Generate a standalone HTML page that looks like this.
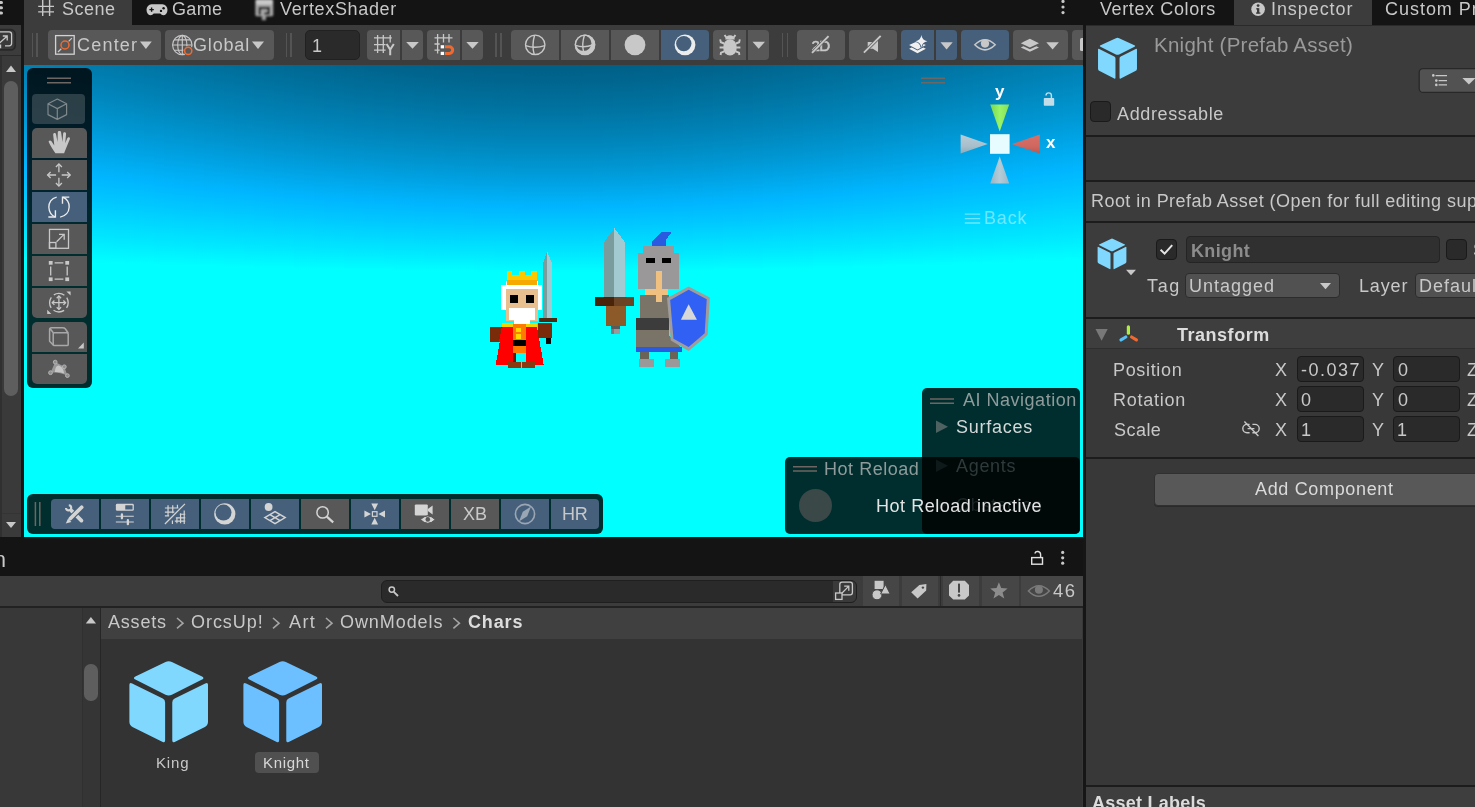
<!DOCTYPE html>
<html><head><meta charset="utf-8"><title>Unity</title>
<style>
html,body{margin:0;padding:0;background:#383838;}
body{width:1475px;height:807px;overflow:hidden;position:relative;font-family:"Liberation Sans",sans-serif;font-size:16px;color:#c8c8c8;}
.a{position:absolute;}
.t{position:absolute;white-space:nowrap;line-height:20px;height:20px;will-change:transform;}
.btn{position:absolute;background:#585858;}
.sel{background:#46607c;}
svg{position:absolute;overflow:visible;}
.fld{position:absolute;background:#2a2a2a;border:1px solid #1a1a1a;border-radius:4px;box-sizing:border-box;}
.hl{position:absolute;background:#1c1c1c;height:2px;}
</style></head><body>
<!-- ===== BACKGROUND PANELS ===== -->
<div class="a" id="tabbar" style="left:0;top:0;width:1475px;height:25px;background:#141414;"></div>
<div class="a" id="leftstrip" style="left:0;top:25px;width:21px;height:512px;background:#3a3a3a;"></div>
<div class="a" style="left:21px;top:25px;width:3px;height:512px;background:#161616;"></div>
<div class="a" id="scenetab" style="left:24px;top:0;width:108px;height:25px;background:#3c3c3c;"></div>
<div class="a" id="toolbar" style="left:24px;top:25px;width:1059px;height:40px;background:#3c3c3c;"></div>
<div class="a" id="scene" style="left:24px;top:65px;width:1059px;height:472px;background:linear-gradient(to bottom,#006a90 0px,#008cc0 60px,#00b0ff 125px,#00d4ff 165px,#00faff 200px,#00ffff 215px);"></div>
<div class="a" id="vdiv" style="left:1083px;top:25px;width:3px;height:782px;background:#161616;"></div>
<div class="a" id="insp" style="left:1086px;top:25px;width:389px;height:782px;background:#383838;border-top:1px solid #2a2a2a;box-sizing:border-box;"></div>
<div class="a" id="insptab" style="left:1234px;top:0;width:138px;height:25px;background:#3c3c3c;"></div>
<div class="a" id="projtabbar" style="left:0;top:537px;width:1083px;height:39px;background:#141414;"></div>
<div class="a" id="projtoolbar" style="left:0;top:575.6px;width:1083px;height:30px;background:#3c3c3c;"></div>
<div class="a" style="left:0;top:605.5px;width:1083px;height:2.2px;background:#222;"></div>
<div class="a" id="tree" style="left:0;top:608px;width:81px;height:199px;background:#383838;"></div>
<div class="a" id="treescroll" style="left:81.5px;top:608px;width:18.5px;height:199px;background:#353535;border-left:1px solid #303030;box-sizing:border-box;"></div>
<div class="a" style="left:100px;top:608px;width:1.4px;height:199px;background:#262626;"></div>
<div class="a" id="crumbbar" style="left:101.4px;top:608px;width:981px;height:31px;background:#404040;"></div>
<div class="a" id="grid" style="left:101.4px;top:639px;width:981px;height:168px;background:#333333;"></div>
<!-- sky strips (perspective skybox gradient) -->
<div class="a" style="left:24px;top:65px;width:1059px;height:472px;overflow:hidden">
<div class="a" style="left:0.0px;top:0;width:10.59px;height:472px;background:linear-gradient(to bottom,#004f6e -166px,#005678 -135px,#005d82 -104px,#00658e -75px,#006e9a -47px,#0078a8 -20px,#0082b6 6px,#008ec6 31px,#009ad8 56px,#00a8eb 80px,#00b6ff 103px,#00b6ff 103px,#00c6ff 127px,#00d8ff 150px,#00eaff 172px,#00ffff 195px)"></div>
<div class="a" style="left:9.99px;top:0;width:10.59px;height:472px;background:linear-gradient(to bottom,#004f6e -163px,#005678 -131px,#005d82 -101px,#00658e -72px,#006e9a -44px,#0078a8 -18px,#0082b6 8px,#008ec6 33px,#009ad8 57px,#00a8eb 81px,#00b6ff 105px,#00b6ff 105px,#00c6ff 128px,#00d8ff 150px,#00eaff 173px,#00ffff 195px)"></div>
<div class="a" style="left:19.98px;top:0;width:10.59px;height:472px;background:linear-gradient(to bottom,#004f6e -159px,#005678 -128px,#005d82 -98px,#00658e -69px,#006e9a -42px,#0078a8 -15px,#0082b6 10px,#008ec6 35px,#009ad8 59px,#00a8eb 83px,#00b6ff 106px,#00b6ff 106px,#00c6ff 129px,#00d8ff 151px,#00eaff 174px,#00ffff 196px)"></div>
<div class="a" style="left:29.97px;top:0;width:10.59px;height:472px;background:linear-gradient(to bottom,#004f6e -155px,#005678 -124px,#005d82 -95px,#00658e -66px,#006e9a -39px,#0078a8 -13px,#0082b6 12px,#008ec6 37px,#009ad8 61px,#00a8eb 84px,#00b6ff 107px,#00b6ff 107px,#00c6ff 130px,#00d8ff 152px,#00eaff 174px,#00ffff 196px)"></div>
<div class="a" style="left:39.96px;top:0;width:10.59px;height:472px;background:linear-gradient(to bottom,#004f6e -152px,#005678 -121px,#005d82 -92px,#00658e -64px,#006e9a -37px,#0078a8 -11px,#0082b6 14px,#008ec6 39px,#009ad8 62px,#00a8eb 86px,#00b6ff 108px,#00b6ff 108px,#00c6ff 131px,#00d8ff 153px,#00eaff 175px,#00ffff 196px)"></div>
<div class="a" style="left:49.95px;top:0;width:10.59px;height:472px;background:linear-gradient(to bottom,#004f6e -148px,#005678 -118px,#005d82 -88px,#00658e -61px,#006e9a -34px,#0078a8 -8px,#0082b6 16px,#008ec6 40px,#009ad8 64px,#00a8eb 87px,#00b6ff 109px,#00b6ff 110px,#00c6ff 132px,#00d8ff 154px,#00eaff 175px,#00ffff 197px)"></div>
<div class="a" style="left:59.94px;top:0;width:10.59px;height:472px;background:linear-gradient(to bottom,#004f6e -144px,#005678 -114px,#005d82 -85px,#00658e -58px,#006e9a -32px,#0078a8 -6px,#0082b6 18px,#008ec6 42px,#009ad8 66px,#00a8eb 88px,#00b6ff 111px,#00b6ff 111px,#00c6ff 133px,#00d8ff 154px,#00eaff 176px,#00ffff 197px)"></div>
<div class="a" style="left:69.93px;top:0;width:10.59px;height:472px;background:linear-gradient(to bottom,#004f6e -141px,#005678 -111px,#005d82 -82px,#00658e -55px,#006e9a -29px,#0078a8 -4px,#0082b6 20px,#008ec6 44px,#009ad8 67px,#00a8eb 90px,#00b6ff 112px,#00b6ff 112px,#00c6ff 134px,#00d8ff 155px,#00eaff 176px,#00ffff 198px)"></div>
<div class="a" style="left:79.92px;top:0;width:10.59px;height:472px;background:linear-gradient(to bottom,#004f6e -137px,#005678 -108px,#005d82 -80px,#00658e -53px,#006e9a -27px,#0078a8 -2px,#0082b6 22px,#008ec6 46px,#009ad8 69px,#00a8eb 91px,#00b6ff 113px,#00b6ff 113px,#00c6ff 135px,#00d8ff 156px,#00eaff 177px,#00ffff 198px)"></div>
<div class="a" style="left:89.92px;top:0;width:10.59px;height:472px;background:linear-gradient(to bottom,#004f6e -134px,#005678 -105px,#005d82 -77px,#00658e -50px,#006e9a -24px,#0078a8 0px,#0082b6 24px,#008ec6 48px,#009ad8 70px,#00a8eb 92px,#00b6ff 114px,#00b6ff 114px,#00c6ff 136px,#00d8ff 157px,#00eaff 178px,#00ffff 198px)"></div>
<div class="a" style="left:99.91px;top:0;width:10.59px;height:472px;background:linear-gradient(to bottom,#004f6e -131px,#005678 -101px,#005d82 -74px,#00658e -47px,#006e9a -22px,#0078a8 3px,#0082b6 26px,#008ec6 49px,#009ad8 72px,#00a8eb 94px,#00b6ff 115px,#00b6ff 115px,#00c6ff 136px,#00d8ff 157px,#00eaff 178px,#00ffff 199px)"></div>
<div class="a" style="left:109.9px;top:0;width:10.59px;height:472px;background:linear-gradient(to bottom,#004f6e -127px,#005678 -98px,#005d82 -71px,#00658e -45px,#006e9a -20px,#0078a8 5px,#0082b6 28px,#008ec6 51px,#009ad8 73px,#00a8eb 95px,#00b6ff 116px,#00b6ff 116px,#00c6ff 137px,#00d8ff 158px,#00eaff 179px,#00ffff 199px)"></div>
<div class="a" style="left:119.89px;top:0;width:10.59px;height:472px;background:linear-gradient(to bottom,#004f6e -124px,#005678 -95px,#005d82 -68px,#00658e -42px,#006e9a -17px,#0078a8 7px,#0082b6 30px,#008ec6 53px,#009ad8 75px,#00a8eb 96px,#00b6ff 117px,#00b6ff 117px,#00c6ff 138px,#00d8ff 159px,#00eaff 179px,#00ffff 199px)"></div>
<div class="a" style="left:129.88px;top:0;width:10.59px;height:472px;background:linear-gradient(to bottom,#004f6e -121px,#005678 -92px,#005d82 -65px,#00658e -40px,#006e9a -15px,#0078a8 9px,#0082b6 32px,#008ec6 54px,#009ad8 76px,#00a8eb 98px,#00b6ff 118px,#00b6ff 119px,#00c6ff 139px,#00d8ff 160px,#00eaff 180px,#00ffff 200px)"></div>
<div class="a" style="left:139.87px;top:0;width:10.59px;height:472px;background:linear-gradient(to bottom,#004f6e -117px,#005678 -89px,#005d82 -63px,#00658e -37px,#006e9a -13px,#0078a8 11px,#0082b6 34px,#008ec6 56px,#009ad8 78px,#00a8eb 99px,#00b6ff 119px,#00b6ff 120px,#00c6ff 140px,#00d8ff 160px,#00eaff 180px,#00ffff 200px)"></div>
<div class="a" style="left:149.86px;top:0;width:10.59px;height:472px;background:linear-gradient(to bottom,#004f6e -114px,#005678 -87px,#005d82 -60px,#00658e -35px,#006e9a -10px,#0078a8 13px,#0082b6 36px,#008ec6 58px,#009ad8 79px,#00a8eb 100px,#00b6ff 121px,#00b6ff 121px,#00c6ff 141px,#00d8ff 161px,#00eaff 181px,#00ffff 200px)"></div>
<div class="a" style="left:159.85px;top:0;width:10.59px;height:472px;background:linear-gradient(to bottom,#004f6e -111px,#005678 -84px,#005d82 -57px,#00658e -32px,#006e9a -8px,#0078a8 15px,#0082b6 37px,#008ec6 59px,#009ad8 80px,#00a8eb 101px,#00b6ff 122px,#00b6ff 122px,#00c6ff 142px,#00d8ff 162px,#00eaff 181px,#00ffff 201px)"></div>
<div class="a" style="left:169.84px;top:0;width:10.59px;height:472px;background:linear-gradient(to bottom,#004f6e -108px,#005678 -81px,#005d82 -55px,#00658e -30px,#006e9a -6px,#0078a8 17px,#0082b6 39px,#008ec6 61px,#009ad8 82px,#00a8eb 102px,#00b6ff 123px,#00b6ff 123px,#00c6ff 143px,#00d8ff 162px,#00eaff 182px,#00ffff 201px)"></div>
<div class="a" style="left:179.83px;top:0;width:10.59px;height:472px;background:linear-gradient(to bottom,#004f6e -105px,#005678 -78px,#005d82 -52px,#00658e -28px,#006e9a -4px,#0078a8 19px,#0082b6 41px,#008ec6 62px,#009ad8 83px,#00a8eb 104px,#00b6ff 124px,#00b6ff 124px,#00c6ff 143px,#00d8ff 163px,#00eaff 182px,#00ffff 201px)"></div>
<div class="a" style="left:189.82px;top:0;width:10.59px;height:472px;background:linear-gradient(to bottom,#004f6e -102px,#005678 -75px,#005d82 -50px,#00658e -25px,#006e9a -2px,#0078a8 21px,#0082b6 42px,#008ec6 64px,#009ad8 84px,#00a8eb 105px,#00b6ff 124px,#00b6ff 125px,#00c6ff 144px,#00d8ff 163px,#00eaff 183px,#00ffff 201px)"></div>
<div class="a" style="left:199.81px;top:0;width:10.59px;height:472px;background:linear-gradient(to bottom,#004f6e -100px,#005678 -73px,#005d82 -48px,#00658e -23px,#006e9a -0px,#0078a8 22px,#0082b6 44px,#008ec6 65px,#009ad8 86px,#00a8eb 106px,#00b6ff 125px,#00b6ff 126px,#00c6ff 145px,#00d8ff 164px,#00eaff 183px,#00ffff 202px)"></div>
<div class="a" style="left:209.8px;top:0;width:10.59px;height:472px;background:linear-gradient(to bottom,#004f6e -97px,#005678 -70px,#005d82 -45px,#00658e -21px,#006e9a 2px,#0078a8 24px,#0082b6 46px,#008ec6 67px,#009ad8 87px,#00a8eb 107px,#00b6ff 126px,#00b6ff 126px,#00c6ff 146px,#00d8ff 165px,#00eaff 183px,#00ffff 202px)"></div>
<div class="a" style="left:219.79px;top:0;width:10.59px;height:472px;background:linear-gradient(to bottom,#004f6e -94px,#005678 -68px,#005d82 -43px,#00658e -19px,#006e9a 4px,#0078a8 26px,#0082b6 47px,#008ec6 68px,#009ad8 88px,#00a8eb 108px,#00b6ff 127px,#00b6ff 127px,#00c6ff 146px,#00d8ff 165px,#00eaff 184px,#00ffff 202px)"></div>
<div class="a" style="left:229.78px;top:0;width:10.59px;height:472px;background:linear-gradient(to bottom,#004f6e -91px,#005678 -65px,#005d82 -41px,#00658e -17px,#006e9a 6px,#0078a8 28px,#0082b6 49px,#008ec6 69px,#009ad8 89px,#00a8eb 109px,#00b6ff 128px,#00b6ff 128px,#00c6ff 147px,#00d8ff 166px,#00eaff 184px,#00ffff 203px)"></div>
<div class="a" style="left:239.77px;top:0;width:10.59px;height:472px;background:linear-gradient(to bottom,#004f6e -89px,#005678 -63px,#005d82 -38px,#00658e -15px,#006e9a 8px,#0078a8 29px,#0082b6 50px,#008ec6 71px,#009ad8 91px,#00a8eb 110px,#00b6ff 129px,#00b6ff 129px,#00c6ff 148px,#00d8ff 166px,#00eaff 185px,#00ffff 203px)"></div>
<div class="a" style="left:249.76px;top:0;width:10.59px;height:472px;background:linear-gradient(to bottom,#004f6e -86px,#005678 -61px,#005d82 -36px,#00658e -13px,#006e9a 9px,#0078a8 31px,#0082b6 52px,#008ec6 72px,#009ad8 92px,#00a8eb 111px,#00b6ff 130px,#00b6ff 130px,#00c6ff 149px,#00d8ff 167px,#00eaff 185px,#00ffff 203px)"></div>
<div class="a" style="left:259.75px;top:0;width:10.59px;height:472px;background:linear-gradient(to bottom,#004f6e -84px,#005678 -58px,#005d82 -34px,#00658e -11px,#006e9a 11px,#0078a8 32px,#0082b6 53px,#008ec6 73px,#009ad8 93px,#00a8eb 112px,#00b6ff 131px,#00b6ff 131px,#00c6ff 149px,#00d8ff 167px,#00eaff 185px,#00ffff 203px)"></div>
<div class="a" style="left:269.75px;top:0;width:10.59px;height:472px;background:linear-gradient(to bottom,#004f6e -81px,#005678 -56px,#005d82 -32px,#00658e -9px,#006e9a 13px,#0078a8 34px,#0082b6 54px,#008ec6 74px,#009ad8 94px,#00a8eb 113px,#00b6ff 131px,#00b6ff 131px,#00c6ff 150px,#00d8ff 168px,#00eaff 186px,#00ffff 204px)"></div>
<div class="a" style="left:279.74px;top:0;width:10.59px;height:472px;background:linear-gradient(to bottom,#004f6e -79px,#005678 -54px,#005d82 -30px,#00658e -8px,#006e9a 14px,#0078a8 35px,#0082b6 56px,#008ec6 76px,#009ad8 95px,#00a8eb 114px,#00b6ff 132px,#00b6ff 132px,#00c6ff 150px,#00d8ff 168px,#00eaff 186px,#00ffff 204px)"></div>
<div class="a" style="left:289.73px;top:0;width:10.59px;height:472px;background:linear-gradient(to bottom,#004f6e -77px,#005678 -52px,#005d82 -28px,#00658e -6px,#006e9a 16px,#0078a8 37px,#0082b6 57px,#008ec6 77px,#009ad8 96px,#00a8eb 115px,#00b6ff 133px,#00b6ff 133px,#00c6ff 151px,#00d8ff 169px,#00eaff 187px,#00ffff 204px)"></div>
<div class="a" style="left:299.72px;top:0;width:10.59px;height:472px;background:linear-gradient(to bottom,#004f6e -75px,#005678 -50px,#005d82 -27px,#00658e -4px,#006e9a 17px,#0078a8 38px,#0082b6 58px,#008ec6 78px,#009ad8 97px,#00a8eb 115px,#00b6ff 134px,#00b6ff 134px,#00c6ff 152px,#00d8ff 169px,#00eaff 187px,#00ffff 204px)"></div>
<div class="a" style="left:309.71px;top:0;width:10.59px;height:472px;background:linear-gradient(to bottom,#004f6e -73px,#005678 -48px,#005d82 -25px,#00658e -3px,#006e9a 19px,#0078a8 39px,#0082b6 59px,#008ec6 79px,#009ad8 98px,#00a8eb 116px,#00b6ff 134px,#00b6ff 134px,#00c6ff 152px,#00d8ff 170px,#00eaff 187px,#00ffff 204px)"></div>
<div class="a" style="left:319.7px;top:0;width:10.59px;height:472px;background:linear-gradient(to bottom,#004f6e -71px,#005678 -46px,#005d82 -23px,#00658e -1px,#006e9a 20px,#0078a8 41px,#0082b6 61px,#008ec6 80px,#009ad8 99px,#00a8eb 117px,#00b6ff 135px,#00b6ff 135px,#00c6ff 153px,#00d8ff 170px,#00eaff 188px,#00ffff 205px)"></div>
<div class="a" style="left:329.69px;top:0;width:10.59px;height:472px;background:linear-gradient(to bottom,#004f6e -69px,#005678 -45px,#005d82 -22px,#00658e 0px,#006e9a 22px,#0078a8 42px,#0082b6 62px,#008ec6 81px,#009ad8 99px,#00a8eb 118px,#00b6ff 136px,#00b6ff 136px,#00c6ff 153px,#00d8ff 171px,#00eaff 188px,#00ffff 205px)"></div>
<div class="a" style="left:339.68px;top:0;width:10.59px;height:472px;background:linear-gradient(to bottom,#004f6e -67px,#005678 -43px,#005d82 -20px,#00658e 2px,#006e9a 23px,#0078a8 43px,#0082b6 63px,#008ec6 82px,#009ad8 100px,#00a8eb 118px,#00b6ff 136px,#00b6ff 136px,#00c6ff 154px,#00d8ff 171px,#00eaff 188px,#00ffff 205px)"></div>
<div class="a" style="left:349.67px;top:0;width:10.59px;height:472px;background:linear-gradient(to bottom,#004f6e -65px,#005678 -41px,#005d82 -19px,#00658e 3px,#006e9a 24px,#0078a8 44px,#0082b6 64px,#008ec6 83px,#009ad8 101px,#00a8eb 119px,#00b6ff 137px,#00b6ff 137px,#00c6ff 154px,#00d8ff 171px,#00eaff 188px,#00ffff 205px)"></div>
<div class="a" style="left:359.66px;top:0;width:10.59px;height:472px;background:linear-gradient(to bottom,#004f6e -64px,#005678 -40px,#005d82 -17px,#00658e 4px,#006e9a 25px,#0078a8 45px,#0082b6 65px,#008ec6 83px,#009ad8 102px,#00a8eb 120px,#00b6ff 137px,#00b6ff 137px,#00c6ff 155px,#00d8ff 172px,#00eaff 189px,#00ffff 205px)"></div>
<div class="a" style="left:369.65px;top:0;width:10.59px;height:472px;background:linear-gradient(to bottom,#004f6e -62px,#005678 -38px,#005d82 -16px,#00658e 6px,#006e9a 26px,#0078a8 46px,#0082b6 66px,#008ec6 84px,#009ad8 103px,#00a8eb 120px,#00b6ff 138px,#00b6ff 138px,#00c6ff 155px,#00d8ff 172px,#00eaff 189px,#00ffff 206px)"></div>
<div class="a" style="left:379.64px;top:0;width:10.59px;height:472px;background:linear-gradient(to bottom,#004f6e -61px,#005678 -37px,#005d82 -15px,#00658e 7px,#006e9a 27px,#0078a8 47px,#0082b6 66px,#008ec6 85px,#009ad8 103px,#00a8eb 121px,#00b6ff 138px,#00b6ff 138px,#00c6ff 155px,#00d8ff 172px,#00eaff 189px,#00ffff 206px)"></div>
<div class="a" style="left:389.63px;top:0;width:10.59px;height:472px;background:linear-gradient(to bottom,#004f6e -59px,#005678 -36px,#005d82 -13px,#00658e 8px,#006e9a 28px,#0078a8 48px,#0082b6 67px,#008ec6 86px,#009ad8 104px,#00a8eb 121px,#00b6ff 139px,#00b6ff 139px,#00c6ff 156px,#00d8ff 173px,#00eaff 189px,#00ffff 206px)"></div>
<div class="a" style="left:399.62px;top:0;width:10.59px;height:472px;background:linear-gradient(to bottom,#004f6e -58px,#005678 -35px,#005d82 -12px,#00658e 9px,#006e9a 29px,#0078a8 49px,#0082b6 68px,#008ec6 86px,#009ad8 104px,#00a8eb 122px,#00b6ff 139px,#00b6ff 139px,#00c6ff 156px,#00d8ff 173px,#00eaff 190px,#00ffff 206px)"></div>
<div class="a" style="left:409.61px;top:0;width:10.59px;height:472px;background:linear-gradient(to bottom,#004f6e -57px,#005678 -33px,#005d82 -11px,#00658e 10px,#006e9a 30px,#0078a8 50px,#0082b6 69px,#008ec6 87px,#009ad8 105px,#00a8eb 122px,#00b6ff 140px,#00b6ff 140px,#00c6ff 157px,#00d8ff 173px,#00eaff 190px,#00ffff 206px)"></div>
<div class="a" style="left:419.6px;top:0;width:10.59px;height:472px;background:linear-gradient(to bottom,#004f6e -56px,#005678 -32px,#005d82 -10px,#00658e 11px,#006e9a 31px,#0078a8 50px,#0082b6 69px,#008ec6 88px,#009ad8 105px,#00a8eb 123px,#00b6ff 140px,#00b6ff 140px,#00c6ff 157px,#00d8ff 173px,#00eaff 190px,#00ffff 206px)"></div>
<div class="a" style="left:429.59px;top:0;width:10.59px;height:472px;background:linear-gradient(to bottom,#004f6e -55px,#005678 -32px,#005d82 -10px,#00658e 11px,#006e9a 32px,#0078a8 51px,#0082b6 70px,#008ec6 88px,#009ad8 106px,#00a8eb 123px,#00b6ff 140px,#00b6ff 140px,#00c6ff 157px,#00d8ff 174px,#00eaff 190px,#00ffff 206px)"></div>
<div class="a" style="left:439.58px;top:0;width:10.59px;height:472px;background:linear-gradient(to bottom,#004f6e -54px,#005678 -31px,#005d82 -9px,#00658e 12px,#006e9a 32px,#0078a8 52px,#0082b6 70px,#008ec6 88px,#009ad8 106px,#00a8eb 124px,#00b6ff 140px,#00b6ff 141px,#00c6ff 157px,#00d8ff 174px,#00eaff 190px,#00ffff 206px)"></div>
<div class="a" style="left:449.58px;top:0;width:10.59px;height:472px;background:linear-gradient(to bottom,#004f6e -53px,#005678 -30px,#005d82 -8px,#00658e 13px,#006e9a 33px,#0078a8 52px,#0082b6 71px,#008ec6 89px,#009ad8 107px,#00a8eb 124px,#00b6ff 141px,#00b6ff 141px,#00c6ff 158px,#00d8ff 174px,#00eaff 190px,#00ffff 207px)"></div>
<div class="a" style="left:459.57px;top:0;width:10.59px;height:472px;background:linear-gradient(to bottom,#004f6e -52px,#005678 -29px,#005d82 -8px,#00658e 13px,#006e9a 33px,#0078a8 53px,#0082b6 71px,#008ec6 89px,#009ad8 107px,#00a8eb 124px,#00b6ff 141px,#00b6ff 141px,#00c6ff 158px,#00d8ff 174px,#00eaff 190px,#00ffff 207px)"></div>
<div class="a" style="left:469.56px;top:0;width:10.59px;height:472px;background:linear-gradient(to bottom,#004f6e -52px,#005678 -29px,#005d82 -7px,#00658e 14px,#006e9a 34px,#0078a8 53px,#0082b6 71px,#008ec6 90px,#009ad8 107px,#00a8eb 124px,#00b6ff 141px,#00b6ff 141px,#00c6ff 158px,#00d8ff 174px,#00eaff 191px,#00ffff 207px)"></div>
<div class="a" style="left:479.55px;top:0;width:10.59px;height:472px;background:linear-gradient(to bottom,#004f6e -51px,#005678 -28px,#005d82 -7px,#00658e 14px,#006e9a 34px,#0078a8 53px,#0082b6 72px,#008ec6 90px,#009ad8 107px,#00a8eb 125px,#00b6ff 141px,#00b6ff 141px,#00c6ff 158px,#00d8ff 174px,#00eaff 191px,#00ffff 207px)"></div>
<div class="a" style="left:489.54px;top:0;width:10.59px;height:472px;background:linear-gradient(to bottom,#004f6e -51px,#005678 -28px,#005d82 -6px,#00658e 14px,#006e9a 34px,#0078a8 53px,#0082b6 72px,#008ec6 90px,#009ad8 108px,#00a8eb 125px,#00b6ff 141px,#00b6ff 142px,#00c6ff 158px,#00d8ff 175px,#00eaff 191px,#00ffff 207px)"></div>
<div class="a" style="left:499.53px;top:0;width:10.59px;height:472px;background:linear-gradient(to bottom,#004f6e -50px,#005678 -28px,#005d82 -6px,#00658e 15px,#006e9a 35px,#0078a8 54px,#0082b6 72px,#008ec6 90px,#009ad8 108px,#00a8eb 125px,#00b6ff 142px,#00b6ff 142px,#00c6ff 158px,#00d8ff 175px,#00eaff 191px,#00ffff 207px)"></div>
<div class="a" style="left:509.52px;top:0;width:10.59px;height:472px;background:linear-gradient(to bottom,#004f6e -50px,#005678 -27px,#005d82 -6px,#00658e 15px,#006e9a 35px,#0078a8 54px,#0082b6 72px,#008ec6 90px,#009ad8 108px,#00a8eb 125px,#00b6ff 142px,#00b6ff 142px,#00c6ff 158px,#00d8ff 175px,#00eaff 191px,#00ffff 207px)"></div>
<div class="a" style="left:519.51px;top:0;width:10.59px;height:472px;background:linear-gradient(to bottom,#004f6e -50px,#005678 -27px,#005d82 -6px,#00658e 15px,#006e9a 35px,#0078a8 54px,#0082b6 72px,#008ec6 90px,#009ad8 108px,#00a8eb 125px,#00b6ff 142px,#00b6ff 142px,#00c6ff 158px,#00d8ff 175px,#00eaff 191px,#00ffff 207px)"></div>
<div class="a" style="left:529.5px;top:0;width:10.59px;height:472px;background:linear-gradient(to bottom,#004f6e -50px,#005678 -27px,#005d82 -6px,#00658e 15px,#006e9a 35px,#0078a8 54px,#0082b6 72px,#008ec6 90px,#009ad8 108px,#00a8eb 125px,#00b6ff 142px,#00b6ff 142px,#00c6ff 158px,#00d8ff 175px,#00eaff 191px,#00ffff 207px)"></div>
<div class="a" style="left:539.49px;top:0;width:10.59px;height:472px;background:linear-gradient(to bottom,#004f6e -50px,#005678 -27px,#005d82 -6px,#00658e 15px,#006e9a 35px,#0078a8 54px,#0082b6 72px,#008ec6 90px,#009ad8 108px,#00a8eb 125px,#00b6ff 142px,#00b6ff 142px,#00c6ff 158px,#00d8ff 175px,#00eaff 191px,#00ffff 207px)"></div>
<div class="a" style="left:549.48px;top:0;width:10.59px;height:472px;background:linear-gradient(to bottom,#004f6e -50px,#005678 -28px,#005d82 -6px,#00658e 15px,#006e9a 35px,#0078a8 54px,#0082b6 72px,#008ec6 90px,#009ad8 108px,#00a8eb 125px,#00b6ff 142px,#00b6ff 142px,#00c6ff 158px,#00d8ff 175px,#00eaff 191px,#00ffff 207px)"></div>
<div class="a" style="left:559.47px;top:0;width:10.59px;height:472px;background:linear-gradient(to bottom,#004f6e -51px,#005678 -28px,#005d82 -6px,#00658e 14px,#006e9a 34px,#0078a8 53px,#0082b6 72px,#008ec6 90px,#009ad8 108px,#00a8eb 125px,#00b6ff 141px,#00b6ff 142px,#00c6ff 158px,#00d8ff 175px,#00eaff 191px,#00ffff 207px)"></div>
<div class="a" style="left:569.46px;top:0;width:10.59px;height:472px;background:linear-gradient(to bottom,#004f6e -51px,#005678 -28px,#005d82 -7px,#00658e 14px,#006e9a 34px,#0078a8 53px,#0082b6 72px,#008ec6 90px,#009ad8 107px,#00a8eb 125px,#00b6ff 141px,#00b6ff 141px,#00c6ff 158px,#00d8ff 174px,#00eaff 191px,#00ffff 207px)"></div>
<div class="a" style="left:579.45px;top:0;width:10.59px;height:472px;background:linear-gradient(to bottom,#004f6e -52px,#005678 -29px,#005d82 -7px,#00658e 14px,#006e9a 34px,#0078a8 53px,#0082b6 71px,#008ec6 90px,#009ad8 107px,#00a8eb 124px,#00b6ff 141px,#00b6ff 141px,#00c6ff 158px,#00d8ff 174px,#00eaff 191px,#00ffff 207px)"></div>
<div class="a" style="left:589.44px;top:0;width:10.59px;height:472px;background:linear-gradient(to bottom,#004f6e -52px,#005678 -29px,#005d82 -8px,#00658e 13px,#006e9a 33px,#0078a8 53px,#0082b6 71px,#008ec6 89px,#009ad8 107px,#00a8eb 124px,#00b6ff 141px,#00b6ff 141px,#00c6ff 158px,#00d8ff 174px,#00eaff 190px,#00ffff 207px)"></div>
<div class="a" style="left:599.43px;top:0;width:10.59px;height:472px;background:linear-gradient(to bottom,#004f6e -53px,#005678 -30px,#005d82 -8px,#00658e 13px,#006e9a 33px,#0078a8 52px,#0082b6 71px,#008ec6 89px,#009ad8 107px,#00a8eb 124px,#00b6ff 141px,#00b6ff 141px,#00c6ff 158px,#00d8ff 174px,#00eaff 190px,#00ffff 207px)"></div>
<div class="a" style="left:609.42px;top:0;width:10.59px;height:472px;background:linear-gradient(to bottom,#004f6e -54px,#005678 -31px,#005d82 -9px,#00658e 12px,#006e9a 32px,#0078a8 52px,#0082b6 70px,#008ec6 88px,#009ad8 106px,#00a8eb 124px,#00b6ff 140px,#00b6ff 141px,#00c6ff 157px,#00d8ff 174px,#00eaff 190px,#00ffff 206px)"></div>
<div class="a" style="left:619.42px;top:0;width:10.59px;height:472px;background:linear-gradient(to bottom,#004f6e -55px,#005678 -32px,#005d82 -10px,#00658e 11px,#006e9a 32px,#0078a8 51px,#0082b6 70px,#008ec6 88px,#009ad8 106px,#00a8eb 123px,#00b6ff 140px,#00b6ff 140px,#00c6ff 157px,#00d8ff 174px,#00eaff 190px,#00ffff 206px)"></div>
<div class="a" style="left:629.41px;top:0;width:10.59px;height:472px;background:linear-gradient(to bottom,#004f6e -56px,#005678 -32px,#005d82 -10px,#00658e 11px,#006e9a 31px,#0078a8 50px,#0082b6 69px,#008ec6 88px,#009ad8 105px,#00a8eb 123px,#00b6ff 140px,#00b6ff 140px,#00c6ff 157px,#00d8ff 173px,#00eaff 190px,#00ffff 206px)"></div>
<div class="a" style="left:639.4px;top:0;width:10.59px;height:472px;background:linear-gradient(to bottom,#004f6e -57px,#005678 -33px,#005d82 -11px,#00658e 10px,#006e9a 30px,#0078a8 50px,#0082b6 69px,#008ec6 87px,#009ad8 105px,#00a8eb 122px,#00b6ff 140px,#00b6ff 140px,#00c6ff 157px,#00d8ff 173px,#00eaff 190px,#00ffff 206px)"></div>
<div class="a" style="left:649.39px;top:0;width:10.59px;height:472px;background:linear-gradient(to bottom,#004f6e -58px,#005678 -35px,#005d82 -12px,#00658e 9px,#006e9a 29px,#0078a8 49px,#0082b6 68px,#008ec6 86px,#009ad8 104px,#00a8eb 122px,#00b6ff 139px,#00b6ff 139px,#00c6ff 156px,#00d8ff 173px,#00eaff 190px,#00ffff 206px)"></div>
<div class="a" style="left:659.38px;top:0;width:10.59px;height:472px;background:linear-gradient(to bottom,#004f6e -59px,#005678 -36px,#005d82 -13px,#00658e 8px,#006e9a 28px,#0078a8 48px,#0082b6 67px,#008ec6 86px,#009ad8 104px,#00a8eb 121px,#00b6ff 139px,#00b6ff 139px,#00c6ff 156px,#00d8ff 173px,#00eaff 189px,#00ffff 206px)"></div>
<div class="a" style="left:669.37px;top:0;width:10.59px;height:472px;background:linear-gradient(to bottom,#004f6e -61px,#005678 -37px,#005d82 -15px,#00658e 7px,#006e9a 27px,#0078a8 47px,#0082b6 66px,#008ec6 85px,#009ad8 103px,#00a8eb 121px,#00b6ff 138px,#00b6ff 138px,#00c6ff 155px,#00d8ff 172px,#00eaff 189px,#00ffff 206px)"></div>
<div class="a" style="left:679.36px;top:0;width:10.59px;height:472px;background:linear-gradient(to bottom,#004f6e -62px,#005678 -38px,#005d82 -16px,#00658e 6px,#006e9a 26px,#0078a8 46px,#0082b6 66px,#008ec6 84px,#009ad8 103px,#00a8eb 120px,#00b6ff 138px,#00b6ff 138px,#00c6ff 155px,#00d8ff 172px,#00eaff 189px,#00ffff 206px)"></div>
<div class="a" style="left:689.35px;top:0;width:10.59px;height:472px;background:linear-gradient(to bottom,#004f6e -64px,#005678 -40px,#005d82 -17px,#00658e 4px,#006e9a 25px,#0078a8 45px,#0082b6 65px,#008ec6 83px,#009ad8 102px,#00a8eb 120px,#00b6ff 137px,#00b6ff 137px,#00c6ff 155px,#00d8ff 172px,#00eaff 189px,#00ffff 205px)"></div>
<div class="a" style="left:699.34px;top:0;width:10.59px;height:472px;background:linear-gradient(to bottom,#004f6e -65px,#005678 -41px,#005d82 -19px,#00658e 3px,#006e9a 24px,#0078a8 44px,#0082b6 64px,#008ec6 83px,#009ad8 101px,#00a8eb 119px,#00b6ff 137px,#00b6ff 137px,#00c6ff 154px,#00d8ff 171px,#00eaff 188px,#00ffff 205px)"></div>
<div class="a" style="left:709.33px;top:0;width:10.59px;height:472px;background:linear-gradient(to bottom,#004f6e -67px,#005678 -43px,#005d82 -20px,#00658e 2px,#006e9a 23px,#0078a8 43px,#0082b6 63px,#008ec6 82px,#009ad8 100px,#00a8eb 118px,#00b6ff 136px,#00b6ff 136px,#00c6ff 154px,#00d8ff 171px,#00eaff 188px,#00ffff 205px)"></div>
<div class="a" style="left:719.32px;top:0;width:10.59px;height:472px;background:linear-gradient(to bottom,#004f6e -69px,#005678 -45px,#005d82 -22px,#00658e 0px,#006e9a 22px,#0078a8 42px,#0082b6 62px,#008ec6 81px,#009ad8 99px,#00a8eb 118px,#00b6ff 136px,#00b6ff 136px,#00c6ff 153px,#00d8ff 171px,#00eaff 188px,#00ffff 205px)"></div>
<div class="a" style="left:729.31px;top:0;width:10.59px;height:472px;background:linear-gradient(to bottom,#004f6e -71px,#005678 -46px,#005d82 -23px,#00658e -1px,#006e9a 20px,#0078a8 41px,#0082b6 61px,#008ec6 80px,#009ad8 99px,#00a8eb 117px,#00b6ff 135px,#00b6ff 135px,#00c6ff 153px,#00d8ff 170px,#00eaff 188px,#00ffff 205px)"></div>
<div class="a" style="left:739.3px;top:0;width:10.59px;height:472px;background:linear-gradient(to bottom,#004f6e -73px,#005678 -48px,#005d82 -25px,#00658e -3px,#006e9a 19px,#0078a8 39px,#0082b6 59px,#008ec6 79px,#009ad8 98px,#00a8eb 116px,#00b6ff 134px,#00b6ff 134px,#00c6ff 152px,#00d8ff 170px,#00eaff 187px,#00ffff 204px)"></div>
<div class="a" style="left:749.29px;top:0;width:10.59px;height:472px;background:linear-gradient(to bottom,#004f6e -75px,#005678 -50px,#005d82 -27px,#00658e -4px,#006e9a 17px,#0078a8 38px,#0082b6 58px,#008ec6 78px,#009ad8 97px,#00a8eb 115px,#00b6ff 134px,#00b6ff 134px,#00c6ff 152px,#00d8ff 169px,#00eaff 187px,#00ffff 204px)"></div>
<div class="a" style="left:759.28px;top:0;width:10.59px;height:472px;background:linear-gradient(to bottom,#004f6e -77px,#005678 -52px,#005d82 -28px,#00658e -6px,#006e9a 16px,#0078a8 37px,#0082b6 57px,#008ec6 77px,#009ad8 96px,#00a8eb 115px,#00b6ff 133px,#00b6ff 133px,#00c6ff 151px,#00d8ff 169px,#00eaff 187px,#00ffff 204px)"></div>
<div class="a" style="left:769.27px;top:0;width:10.59px;height:472px;background:linear-gradient(to bottom,#004f6e -79px,#005678 -54px,#005d82 -30px,#00658e -8px,#006e9a 14px,#0078a8 35px,#0082b6 56px,#008ec6 76px,#009ad8 95px,#00a8eb 114px,#00b6ff 132px,#00b6ff 132px,#00c6ff 150px,#00d8ff 168px,#00eaff 186px,#00ffff 204px)"></div>
<div class="a" style="left:779.26px;top:0;width:10.59px;height:472px;background:linear-gradient(to bottom,#004f6e -81px,#005678 -56px,#005d82 -32px,#00658e -9px,#006e9a 13px,#0078a8 34px,#0082b6 54px,#008ec6 74px,#009ad8 94px,#00a8eb 113px,#00b6ff 131px,#00b6ff 131px,#00c6ff 150px,#00d8ff 168px,#00eaff 186px,#00ffff 204px)"></div>
<div class="a" style="left:789.25px;top:0;width:10.59px;height:472px;background:linear-gradient(to bottom,#004f6e -84px,#005678 -58px,#005d82 -34px,#00658e -11px,#006e9a 11px,#0078a8 32px,#0082b6 53px,#008ec6 73px,#009ad8 93px,#00a8eb 112px,#00b6ff 131px,#00b6ff 131px,#00c6ff 149px,#00d8ff 167px,#00eaff 185px,#00ffff 203px)"></div>
<div class="a" style="left:799.25px;top:0;width:10.59px;height:472px;background:linear-gradient(to bottom,#004f6e -86px,#005678 -61px,#005d82 -36px,#00658e -13px,#006e9a 9px,#0078a8 31px,#0082b6 52px,#008ec6 72px,#009ad8 92px,#00a8eb 111px,#00b6ff 130px,#00b6ff 130px,#00c6ff 149px,#00d8ff 167px,#00eaff 185px,#00ffff 203px)"></div>
<div class="a" style="left:809.24px;top:0;width:10.59px;height:472px;background:linear-gradient(to bottom,#004f6e -89px,#005678 -63px,#005d82 -38px,#00658e -15px,#006e9a 8px,#0078a8 29px,#0082b6 50px,#008ec6 71px,#009ad8 91px,#00a8eb 110px,#00b6ff 129px,#00b6ff 129px,#00c6ff 148px,#00d8ff 166px,#00eaff 185px,#00ffff 203px)"></div>
<div class="a" style="left:819.23px;top:0;width:10.59px;height:472px;background:linear-gradient(to bottom,#004f6e -91px,#005678 -65px,#005d82 -41px,#00658e -17px,#006e9a 6px,#0078a8 28px,#0082b6 49px,#008ec6 69px,#009ad8 89px,#00a8eb 109px,#00b6ff 128px,#00b6ff 128px,#00c6ff 147px,#00d8ff 166px,#00eaff 184px,#00ffff 203px)"></div>
<div class="a" style="left:829.22px;top:0;width:10.59px;height:472px;background:linear-gradient(to bottom,#004f6e -94px,#005678 -68px,#005d82 -43px,#00658e -19px,#006e9a 4px,#0078a8 26px,#0082b6 47px,#008ec6 68px,#009ad8 88px,#00a8eb 108px,#00b6ff 127px,#00b6ff 127px,#00c6ff 146px,#00d8ff 165px,#00eaff 184px,#00ffff 202px)"></div>
<div class="a" style="left:839.21px;top:0;width:10.59px;height:472px;background:linear-gradient(to bottom,#004f6e -97px,#005678 -70px,#005d82 -45px,#00658e -21px,#006e9a 2px,#0078a8 24px,#0082b6 46px,#008ec6 67px,#009ad8 87px,#00a8eb 107px,#00b6ff 126px,#00b6ff 126px,#00c6ff 146px,#00d8ff 165px,#00eaff 183px,#00ffff 202px)"></div>
<div class="a" style="left:849.2px;top:0;width:10.59px;height:472px;background:linear-gradient(to bottom,#004f6e -100px,#005678 -73px,#005d82 -48px,#00658e -23px,#006e9a -0px,#0078a8 22px,#0082b6 44px,#008ec6 65px,#009ad8 86px,#00a8eb 106px,#00b6ff 125px,#00b6ff 126px,#00c6ff 145px,#00d8ff 164px,#00eaff 183px,#00ffff 202px)"></div>
<div class="a" style="left:859.19px;top:0;width:10.59px;height:472px;background:linear-gradient(to bottom,#004f6e -102px,#005678 -75px,#005d82 -50px,#00658e -25px,#006e9a -2px,#0078a8 21px,#0082b6 42px,#008ec6 64px,#009ad8 84px,#00a8eb 105px,#00b6ff 124px,#00b6ff 125px,#00c6ff 144px,#00d8ff 163px,#00eaff 183px,#00ffff 201px)"></div>
<div class="a" style="left:869.18px;top:0;width:10.59px;height:472px;background:linear-gradient(to bottom,#004f6e -105px,#005678 -78px,#005d82 -52px,#00658e -28px,#006e9a -4px,#0078a8 19px,#0082b6 41px,#008ec6 62px,#009ad8 83px,#00a8eb 104px,#00b6ff 124px,#00b6ff 124px,#00c6ff 143px,#00d8ff 163px,#00eaff 182px,#00ffff 201px)"></div>
<div class="a" style="left:879.17px;top:0;width:10.59px;height:472px;background:linear-gradient(to bottom,#004f6e -108px,#005678 -81px,#005d82 -55px,#00658e -30px,#006e9a -6px,#0078a8 17px,#0082b6 39px,#008ec6 61px,#009ad8 82px,#00a8eb 102px,#00b6ff 123px,#00b6ff 123px,#00c6ff 143px,#00d8ff 162px,#00eaff 182px,#00ffff 201px)"></div>
<div class="a" style="left:889.16px;top:0;width:10.59px;height:472px;background:linear-gradient(to bottom,#004f6e -111px,#005678 -84px,#005d82 -57px,#00658e -32px,#006e9a -8px,#0078a8 15px,#0082b6 37px,#008ec6 59px,#009ad8 80px,#00a8eb 101px,#00b6ff 122px,#00b6ff 122px,#00c6ff 142px,#00d8ff 162px,#00eaff 181px,#00ffff 201px)"></div>
<div class="a" style="left:899.15px;top:0;width:10.59px;height:472px;background:linear-gradient(to bottom,#004f6e -114px,#005678 -87px,#005d82 -60px,#00658e -35px,#006e9a -10px,#0078a8 13px,#0082b6 36px,#008ec6 58px,#009ad8 79px,#00a8eb 100px,#00b6ff 121px,#00b6ff 121px,#00c6ff 141px,#00d8ff 161px,#00eaff 181px,#00ffff 200px)"></div>
<div class="a" style="left:909.14px;top:0;width:10.59px;height:472px;background:linear-gradient(to bottom,#004f6e -117px,#005678 -89px,#005d82 -63px,#00658e -37px,#006e9a -13px,#0078a8 11px,#0082b6 34px,#008ec6 56px,#009ad8 78px,#00a8eb 99px,#00b6ff 119px,#00b6ff 120px,#00c6ff 140px,#00d8ff 160px,#00eaff 180px,#00ffff 200px)"></div>
<div class="a" style="left:919.13px;top:0;width:10.59px;height:472px;background:linear-gradient(to bottom,#004f6e -121px,#005678 -92px,#005d82 -65px,#00658e -40px,#006e9a -15px,#0078a8 9px,#0082b6 32px,#008ec6 54px,#009ad8 76px,#00a8eb 98px,#00b6ff 118px,#00b6ff 119px,#00c6ff 139px,#00d8ff 160px,#00eaff 180px,#00ffff 200px)"></div>
<div class="a" style="left:929.12px;top:0;width:10.59px;height:472px;background:linear-gradient(to bottom,#004f6e -124px,#005678 -95px,#005d82 -68px,#00658e -42px,#006e9a -17px,#0078a8 7px,#0082b6 30px,#008ec6 53px,#009ad8 75px,#00a8eb 96px,#00b6ff 117px,#00b6ff 117px,#00c6ff 138px,#00d8ff 159px,#00eaff 179px,#00ffff 199px)"></div>
<div class="a" style="left:939.11px;top:0;width:10.59px;height:472px;background:linear-gradient(to bottom,#004f6e -127px,#005678 -98px,#005d82 -71px,#00658e -45px,#006e9a -20px,#0078a8 5px,#0082b6 28px,#008ec6 51px,#009ad8 73px,#00a8eb 95px,#00b6ff 116px,#00b6ff 116px,#00c6ff 137px,#00d8ff 158px,#00eaff 179px,#00ffff 199px)"></div>
<div class="a" style="left:949.1px;top:0;width:10.59px;height:472px;background:linear-gradient(to bottom,#004f6e -131px,#005678 -101px,#005d82 -74px,#00658e -47px,#006e9a -22px,#0078a8 3px,#0082b6 26px,#008ec6 49px,#009ad8 72px,#00a8eb 94px,#00b6ff 115px,#00b6ff 115px,#00c6ff 136px,#00d8ff 157px,#00eaff 178px,#00ffff 199px)"></div>
<div class="a" style="left:959.09px;top:0;width:10.59px;height:472px;background:linear-gradient(to bottom,#004f6e -134px,#005678 -105px,#005d82 -77px,#00658e -50px,#006e9a -24px,#0078a8 0px,#0082b6 24px,#008ec6 48px,#009ad8 70px,#00a8eb 92px,#00b6ff 114px,#00b6ff 114px,#00c6ff 136px,#00d8ff 157px,#00eaff 178px,#00ffff 198px)"></div>
<div class="a" style="left:969.08px;top:0;width:10.59px;height:472px;background:linear-gradient(to bottom,#004f6e -137px,#005678 -108px,#005d82 -80px,#00658e -53px,#006e9a -27px,#0078a8 -2px,#0082b6 22px,#008ec6 46px,#009ad8 69px,#00a8eb 91px,#00b6ff 113px,#00b6ff 113px,#00c6ff 135px,#00d8ff 156px,#00eaff 177px,#00ffff 198px)"></div>
<div class="a" style="left:979.08px;top:0;width:10.59px;height:472px;background:linear-gradient(to bottom,#004f6e -141px,#005678 -111px,#005d82 -82px,#00658e -55px,#006e9a -29px,#0078a8 -4px,#0082b6 20px,#008ec6 44px,#009ad8 67px,#00a8eb 90px,#00b6ff 112px,#00b6ff 112px,#00c6ff 134px,#00d8ff 155px,#00eaff 176px,#00ffff 198px)"></div>
<div class="a" style="left:989.07px;top:0;width:10.59px;height:472px;background:linear-gradient(to bottom,#004f6e -144px,#005678 -114px,#005d82 -85px,#00658e -58px,#006e9a -32px,#0078a8 -6px,#0082b6 18px,#008ec6 42px,#009ad8 66px,#00a8eb 88px,#00b6ff 111px,#00b6ff 111px,#00c6ff 133px,#00d8ff 154px,#00eaff 176px,#00ffff 197px)"></div>
<div class="a" style="left:999.06px;top:0;width:10.59px;height:472px;background:linear-gradient(to bottom,#004f6e -148px,#005678 -118px,#005d82 -88px,#00658e -61px,#006e9a -34px,#0078a8 -8px,#0082b6 16px,#008ec6 40px,#009ad8 64px,#00a8eb 87px,#00b6ff 109px,#00b6ff 110px,#00c6ff 132px,#00d8ff 154px,#00eaff 175px,#00ffff 197px)"></div>
<div class="a" style="left:1009.05px;top:0;width:10.59px;height:472px;background:linear-gradient(to bottom,#004f6e -152px,#005678 -121px,#005d82 -92px,#00658e -64px,#006e9a -37px,#0078a8 -11px,#0082b6 14px,#008ec6 39px,#009ad8 62px,#00a8eb 86px,#00b6ff 108px,#00b6ff 108px,#00c6ff 131px,#00d8ff 153px,#00eaff 175px,#00ffff 196px)"></div>
<div class="a" style="left:1019.04px;top:0;width:10.59px;height:472px;background:linear-gradient(to bottom,#004f6e -155px,#005678 -124px,#005d82 -95px,#00658e -66px,#006e9a -39px,#0078a8 -13px,#0082b6 12px,#008ec6 37px,#009ad8 61px,#00a8eb 84px,#00b6ff 107px,#00b6ff 107px,#00c6ff 130px,#00d8ff 152px,#00eaff 174px,#00ffff 196px)"></div>
<div class="a" style="left:1029.03px;top:0;width:10.59px;height:472px;background:linear-gradient(to bottom,#004f6e -159px,#005678 -128px,#005d82 -98px,#00658e -69px,#006e9a -42px,#0078a8 -15px,#0082b6 10px,#008ec6 35px,#009ad8 59px,#00a8eb 83px,#00b6ff 106px,#00b6ff 106px,#00c6ff 129px,#00d8ff 151px,#00eaff 174px,#00ffff 196px)"></div>
<div class="a" style="left:1039.02px;top:0;width:10.59px;height:472px;background:linear-gradient(to bottom,#004f6e -163px,#005678 -131px,#005d82 -101px,#00658e -72px,#006e9a -44px,#0078a8 -18px,#0082b6 8px,#008ec6 33px,#009ad8 57px,#00a8eb 81px,#00b6ff 105px,#00b6ff 105px,#00c6ff 128px,#00d8ff 150px,#00eaff 173px,#00ffff 195px)"></div>
<div class="a" style="left:1049.01px;top:0;width:10.59px;height:472px;background:linear-gradient(to bottom,#004f6e -166px,#005678 -135px,#005d82 -104px,#00658e -75px,#006e9a -47px,#0078a8 -20px,#0082b6 6px,#008ec6 31px,#009ad8 56px,#00a8eb 80px,#00b6ff 103px,#00b6ff 103px,#00c6ff 127px,#00d8ff 150px,#00eaff 172px,#00ffff 195px)"></div>
</div>

<!-- ===== TOP-LEFT STRIP ===== -->
<div class="a" style="left:0;top:25px;width:21px;height:31px;background:#3c3c3c;"></div>
<svg style="left:0;top:0" width="24" height="60" viewBox="0 0 24 60">
  <rect x="-2" y="1" width="5" height="3" rx="1.5" fill="#c8c8c8"/><rect x="-2" y="6.3" width="5" height="3" rx="1.5" fill="#c8c8c8"/><rect x="-2" y="11.6" width="5" height="3" rx="1.5" fill="#c8c8c8"/>
  <rect x="-6" y="29.7" width="21.2" height="20.2" rx="4.5" fill="#3a3a3a" stroke="#282828" stroke-width="1.7"/>
  <rect x="-4" y="31.8" width="15.6" height="14" rx="2.5" fill="none" stroke="#c8c8c8" stroke-width="1.3"/>
  <rect x="-4" y="38.5" width="9" height="9" fill="#3a3a3a"/>
  <path d="M-1 43.500 L7 36.2 M2.8 36 H7.2 V40.600" fill="none" stroke="#c8c8c8" stroke-width="1.3"/><path d="M0.600 44.500 V48.200" stroke="#c8c8c8" stroke-width="1.2"/>
</svg>
<div class="a" style="left:0;top:54.600px;width:21px;height:1.6px;background:#2a2a2a"></div>
<!-- ===== SCENE TABS ===== -->
<svg style="left:36px;top:0" width="20" height="18" viewBox="36 0 20 18">
  <path d="M42.7 0V16 M49.6 0V16 M38.2 6.4H54 M38.2 11.9H54" stroke="#c8c8c8" stroke-width="1.4" fill="none"/>
</svg>
<svg style="left:145px;top:3px" width="24" height="14" viewBox="145 3 24 14">
  <path d="M151.5 4.3 H162.5 A5 5.5 0 0 1 167.5 9.8 A4.2 5.5 0 0 1 163.3 15.3 Q161.5 15.3 160.3 13.6 H153.7 Q152.5 15.3 150.7 15.3 A4.2 5.5 0 0 1 146.5 9.8 A5 5.5 0 0 1 151.5 4.3 Z" fill="#c8c8c8"/>
  <path d="M151.6 7.4V11.8 M149.4 9.6H153.8" stroke="#141414" stroke-width="1.4"/>
  <circle cx="161" cy="10.9" r="1.2" fill="#141414"/><circle cx="163.6" cy="8.3" r="1.2" fill="#141414"/>
</svg>
<svg style="left:254px;top:0" width="22" height="20" viewBox="254 0 22 20">
  <defs><filter id="bl1" x="-20%" y="-20%" width="140%" height="140%"><feGaussianBlur stdDeviation="1"/></filter></defs>
  <g filter="url(#bl1)">
  <rect x="255.4" y="-1" width="17.8" height="17.2" rx="1.5" fill="#ababab"/>
  <rect x="256" y="0.6" width="16.6" height="3.6" fill="#cdcdcd"/>
  <path d="M259.800 15 V8 H268.800 V13.400 H264.400" fill="none" stroke="#1c1c1c" stroke-width="2.5"/>
  <rect x="261.800" y="16" width="4.200" height="4.200" fill="#9a9a9a"/>
  </g>
</svg>
<svg style="left:1058px;top:0" width="10" height="16" viewBox="1058 0 10 16">
  <circle cx="1063" cy="1.4" r="1.6" fill="#c8c8c8"/><circle cx="1063" cy="7" r="1.6" fill="#c8c8c8"/><circle cx="1063" cy="12.6" r="1.6" fill="#c8c8c8"/>
</svg>
<!-- ===== SCENE TOOLBAR ===== -->
<div class="a" style="left:31.5px;top:33px;width:1.5px;height:24px;background:#545454"></div><div class="a" style="left:36.3px;top:33px;width:1.5px;height:24px;background:#545454"></div>
<div class="a" style="left:285.5px;top:33px;width:1.5px;height:24px;background:#545454"></div><div class="a" style="left:290.3px;top:33px;width:1.5px;height:24px;background:#545454"></div>
<div class="a" style="left:495.3px;top:33px;width:1.5px;height:24px;background:#545454"></div><div class="a" style="left:500.1px;top:33px;width:1.5px;height:24px;background:#545454"></div>
<div class="a" style="left:781.8px;top:33px;width:1.5px;height:24px;background:#545454"></div><div class="a" style="left:786.5px;top:33px;width:1.5px;height:24px;background:#545454"></div>
<div class="btn" style="left:48px;top:30px;width:112.7px;height:30px;border-radius:4px"></div>
<div class="btn" style="left:165px;top:30px;width:109px;height:30px;border-radius:4px"></div>
<div class="fld" style="left:305px;top:30px;width:55px;height:30px;border-radius:5px;border:1.5px solid #212121"></div>
<div class="btn" style="left:367px;top:30px;width:33px;height:30px;border-radius:4px 0 0 4px"></div>
<div class="btn" style="left:402px;top:30px;width:21px;height:30px;border-radius:0 4px 4px 0"></div>
<div class="btn" style="left:427px;top:30px;width:33px;height:30px;border-radius:4px 0 0 4px"></div>
<div class="btn" style="left:462px;top:30px;width:21px;height:30px;border-radius:0 4px 4px 0"></div>
<div class="btn" style="left:511.3px;top:30px;width:47.7px;height:30px;border-radius:4px 0 0 4px"></div>
<div class="btn" style="left:561px;top:30px;width:47.7px;height:30px;"></div>
<div class="btn" style="left:610.8px;top:30px;width:48px;height:30px;"></div>
<div class="btn sel" style="left:660.8px;top:30px;width:48px;height:30px;border-radius:0 4px 4px 0"></div>
<div class="btn" style="left:713px;top:30px;width:32.8px;height:30px;border-radius:4px 0 0 4px"></div>
<div class="btn" style="left:747.8px;top:30px;width:21.2px;height:30px;border-radius:0 4px 4px 0"></div>
<div class="btn" style="left:797px;top:30px;width:48px;height:30px;border-radius:4px"></div>
<div class="btn" style="left:849px;top:30px;width:48px;height:30px;border-radius:4px"></div>
<div class="btn sel" style="left:901px;top:30px;width:33px;height:30px;border-radius:4px 0 0 4px"></div>
<div class="btn sel" style="left:936px;top:30px;width:21px;height:30px;border-radius:0 4px 4px 0"></div>
<div class="btn sel" style="left:961px;top:30px;width:48px;height:30px;border-radius:4px"></div>
<div class="btn" style="left:1013px;top:30px;width:55px;height:30px;border-radius:4px"></div>
<div class="btn" style="left:1072px;top:30px;width:11px;height:30px;border-radius:4px 0 0 4px"></div>
<div class="a" style="left:1079.5px;top:38px;width:3.5px;height:13px;background:#c8c8c8;border-radius:1.5px 0 0 1.5px"></div>
<!-- toolbar icons -->
<svg style="left:0;top:25px" width="1083" height="40" viewBox="0 25 1083 40">
  <!-- pivot center -->
  <rect x="55.6" y="35.6" width="18.6" height="18.6" fill="none" stroke="#d2d2d2" stroke-width="1.3"/>
  <path d="M58 52 L61.3 48.7 M68.6 41.4 L71.9 38.1" stroke="#c8c8c8" stroke-width="1.3"/>
  <circle cx="65" cy="45" r="4" fill="none" stroke="#f06a30" stroke-width="1.5"/>
  <path d="M140 41.4 H151.8 L145.9 49 Z" fill="#c8c8c8"/>
  <!-- globe -->
  <g fill="none" stroke="#c8c8c8" stroke-width="1.15">
   <circle cx="182.3" cy="45" r="9.7"/><ellipse cx="182.3" cy="45" rx="4.6" ry="9.7"/><path d="M172.6 45H192 M174 39.8H190.6 M174 50.2H190.6 M182.3 35.3V54.7"/>
  </g>
  <circle cx="188.2" cy="50.8" r="4.9" fill="#585858"/>
  <circle cx="188.2" cy="50.8" r="3.6" fill="none" stroke="#f06a30" stroke-width="1.5"/>
  <path d="M252 41.4 H264 L258 49 Z" fill="#c8c8c8"/>
  <!-- grid Y -->
  <path d="M377.6 35V53 M383.3 35V53 M390.2 35V42.5 M374 37.8H391.8 M374 44.7H385.6 M374 50.2H385.6" stroke="#c8c8c8" stroke-width="1.3" fill="none"/>
  <path d="M386.6 44 L390.2 49.6 L393.8 44 M390.2 49.6 V55.2" stroke="#c8c8c8" stroke-width="2" fill="none"/>
  <path d="M406.2 42 H418.8 L412.5 48.7 Z" fill="#c8c8c8"/>
  <!-- snap -->
  <path d="M437.6 34V53.5 M443.5 34V42.6 M449 34V42.6 M434.5 37.8H452.5 M434.5 44H439.7 M434.5 50.2H439.7" stroke="#c8c8c8" stroke-width="1.3" fill="none"/>
  <path d="M445 46.8 H449.4 A3.3 3.3 0 0 1 449.4 53.4 H445" fill="none" stroke="#f06a30" stroke-width="3"/>
  <rect x="440.7" y="45.2" width="3.4" height="3.2" fill="#fff"/><rect x="440.7" y="51.8" width="3.4" height="3.2" fill="#fff"/>
  <path d="M466.3 42 H478.7 L472.5 48.7 Z" fill="#c8c8c8"/>
</svg>

<svg style="left:0;top:25px;will-change:transform" width="1083" height="40" viewBox="0 25 1083 40">
  <!-- wire sphere -->
  <g fill="none" stroke="#c8c8c8" stroke-width="1.4">
    <circle cx="535.2" cy="44.8" r="9.7"/>
    <path d="M534.6 35.2 Q531.6 45 534.2 54.4"/><path d="M525.6 45.6 Q535 48.8 544.8 45.6"/>
  </g>
  <!-- shaded wire -->
  <circle cx="585" cy="44.8" r="10.2" fill="#c8c8c8"/>
  <circle cx="583.6" cy="43.2" r="7.8" fill="#585858"/>
  <g fill="none" stroke="#c8c8c8" stroke-width="1.4">
    <circle cx="585" cy="44.8" r="9.7"/>
    <path d="M584.4 35.2 Q581.6 44 583.6 51.5"/><path d="M575.5 45.4 Q584 48.2 592.5 45"/>
  </g>
  <!-- solid -->
  <circle cx="635" cy="44.8" r="10.4" fill="#c8c8c8"/>
  <!-- crescent selected -->
  <circle cx="685" cy="44.8" r="10.4" fill="#ececec"/>
  <circle cx="683.8" cy="43.6" r="7.7" fill="#46607c"/>
  <!-- bug -->
  <g fill="#c8c8c8" stroke="none">
    <ellipse cx="730" cy="47.4" rx="6.8" ry="8.2"/>
    <path d="M725.2 39.6 A4.8 4.4 0 0 1 734.8 39.6Z"/>
  </g>
  <path d="M726.3 37.6 L724.6 35 M733.7 37.6 L735.4 35 M724.2 43.5 L720.8 42.2 L720.2 39.4 M735.8 43.5 L739.2 42.2 L739.8 39.4 M723.8 47.5 H719.6 M736.2 47.5 H740.4 M724.4 51.4 L721 52.6 L720.6 55 M735.6 51.4 L739 52.6 L739.4 55" stroke="#c8c8c8" stroke-width="1.9" fill="none"/>
  <path d="M752.5 41.8 H765 L758.7 48.8 Z" fill="#c8c8c8"/>
  <!-- 2D / audio / fx (zoom coords) -->
  <svg x="795" y="28" width="165" height="34" viewBox="0 0 1475 304">
    <text x="148" y="204" font-family="Liberation Sans, sans-serif" font-size="136" fill="#c8c8c8" stroke="#c8c8c8" stroke-width="5" letter-spacing="-7">2D</text>
    <path d="M152 222 L300 72" stroke="#585858" stroke-width="27"/>
    <path d="M152 222 L300 72" stroke="#c8c8c8" stroke-width="17"/>
    <path d="M650 126 H696 L742 100 V214 L696 186 H650Z" fill="#c8c8c8"/>
    <path d="M616 220 L766 70" stroke="#585858" stroke-width="30"/>
    <path d="M616 220 L766 70" stroke="#c8c8c8" stroke-width="17"/>
    <path d="M1020 152 L1095 118 L1170 152 L1095 192Z" fill="#f0f0f0"/>
    <path d="M1020 186 L1044 175 L1095 202 L1146 175 L1170 186 L1095 226Z" fill="#f0f0f0"/>
    <path d="M1130 62 Q1136 112 1184 118 Q1136 124 1130 174 Q1124 124 1076 118 Q1124 112 1130 62Z" fill="#f0f0f0" stroke="#46607c" stroke-width="16" paint-order="stroke"/>
  </svg>
  <path d="M940.5 42.3 H952.7 L946.6 49.4 Z" fill="#c8c8c8"/>
  <!-- eye -->
  <path d="M974.8 44.8 Q985 34.6 995.2 44.8 Q985 55 974.8 44.8Z" fill="none" stroke="#c8c8c8" stroke-width="1.5"/>
  <circle cx="985" cy="43.6" r="4.1" fill="#c8c8c8"/>
  <!-- layers -->
  <g fill="#c8c8c8">
    <path d="M1020.8 43.2 L1029.9 38.8 L1039 43.2 L1029.9 47.6 Z"/>
    <path d="M1020.8 47.4 L1023.4 46.2 L1029.9 49.3 L1036.4 46.2 L1039 47.4 L1029.9 51.8 Z"/>
  </g>
  <path d="M1046.3 42.3 H1058.9 L1052.6 49.4 Z" fill="#c8c8c8"/>
</svg>

<!-- ===== CHARACTERS (pixel art) ===== -->
<svg style="left:460px;top:210px" width="280" height="180" viewBox="0 0 1255 807" shape-rendering="crispEdges">
  <!-- KING -->
  <g>
    <!-- sword -->
    <path d="M372 240 L391 185 L391 485 L372 485Z" fill="#7c9c9c"/>
    <path d="M391 185 L412 240 L412 485 L391 485Z" fill="#a2caD0"/>
    <rect x="353" y="485" width="82" height="17" fill="#4a2a10"/>
    <rect x="387" y="570" width="21" height="30" fill="#0a0a0a"/>
    <!-- cape -->
    <path d="M190 525 H345 L375 693 H297 V640 H250 V693 H160 Z" fill="#ff0000"/>
    <!-- arms -->
    <rect x="135" y="525" width="52" height="65" fill="#7a2c0a"/>
    <path d="M187 525 L175 590 H187Z" fill="#ff0000"/>
    <rect x="350" y="505" width="63" height="67" fill="#7a2c0a"/>
    <!-- body -->
    <rect x="237" y="510" width="60" height="132" fill="#ff7a00"/>
    <rect x="250" y="527" width="23" height="19" fill="#ffd800"/><rect x="250" y="557" width="23" height="20" fill="#ffd800"/>
    <rect x="237" y="585" width="60" height="25" fill="#000"/>
    <rect x="237" y="642" width="13" height="44" fill="#5a1e06"/>
    <!-- shoulders -->
    <rect x="190" y="507" width="47" height="18" fill="#f2d200"/><rect x="297" y="507" width="48" height="18" fill="#f2d200"/>
    <!-- shoes -->
    <rect x="215" y="683" width="57" height="24" fill="#8a3a10"/><rect x="280" y="683" width="55" height="24" fill="#8a3a10"/>
    <!-- hair -->
    <path d="M207 320 H350 V335 H367 V450 H350 V470 H207 V450 H185 V335 H207Z" fill="#ffffff"/>
    <!-- face -->
    <rect x="207" y="353" width="143" height="144" fill="#e8c090"/>
    <rect x="225" y="380" width="35" height="38" fill="#000"/><rect x="297" y="380" width="36" height="38" fill="#000"/>
    <!-- beard -->
    <path d="M220 440 H335 V495 H315 V510 H243 V495 H220Z" fill="#ffffff"/>
    <!-- crown -->
    <path d="M210 273 H235 V293 H263 V273 H290 V293 H320 V273 H347 V312 H210Z" fill="#fcc800"/>
    <rect x="210" y="312" width="137" height="24" fill="#f6aa00"/>
  </g>
  <!-- KNIGHT -->
  <g>
    <!-- sword -->
    <path d="M645 145 L692 82 V390 H645Z" fill="#7a9c9c"/>
    <path d="M692 82 L740 145 V390 H692Z" fill="#a2cad0"/>
    <rect x="605" y="390" width="87" height="40" fill="#4a2408"/><rect x="692" y="390" width="88" height="40" fill="#6a4424"/>
    <rect x="655" y="430" width="90" height="90" fill="#8c5a28"/>
    <rect x="677" y="520" width="40" height="14" fill="#5a5a5a"/><rect x="677" y="534" width="40" height="21" fill="#9a9a9a"/><rect x="677" y="534" width="14" height="21" fill="#7a7a7a"/>
    <!-- plume -->
    <path d="M862 162 V140 L905 98 H950 L925 130 V162Z" fill="#2a5ae0"/>
    <!-- body -->
    <path d="M805 383 H935 V560 L990 615 H790 V483 H805Z" fill="#7a7468"/>
    <rect x="790" y="483" width="148" height="57" fill="#3c3c3c"/>
    <rect x="790" y="615" width="205" height="22" fill="#2a5ae0"/>
    <rect x="807" y="637" width="40" height="33" fill="#6a6458"/><rect x="940" y="637" width="37" height="33" fill="#6a6458"/>
    <rect x="803" y="668" width="65" height="35" fill="#9a9898"/><rect x="918" y="668" width="67" height="35" fill="#9a9898"/>
    <!-- helmet -->
    <path d="M822 160 H958 V193 H980 V353 H797 V193 H822Z" fill="#9a9898"/>
    <rect x="833" y="215" width="40" height="22" fill="#000"/><rect x="905" y="215" width="40" height="22" fill="#000"/>
    <rect x="830" y="353" width="102" height="30" fill="#f0c080"/>
    <rect x="877" y="272" width="28" height="140" fill="#f0c080"/>
    <!-- shield -->
    <path d="M1025 343 L1120 392 L1110 560 L1025 632 L945 585 L928 395Z" fill="#a09c9c" shape-rendering="geometricPrecision"/>
    <path d="M1025 358 L1106 400 L1097 553 L1025 614 L957 577 L942 403Z" fill="#3060f4" shape-rendering="geometricPrecision"/>
    <path d="M1025 423 L1062 492 H990Z" fill="#d8d8d8" shape-rendering="geometricPrecision"/>
  </g>
</svg>

<!-- ===== TOOLS OVERLAY ===== -->
<div class="a" style="left:27px;top:68px;width:65px;height:319.5px;background:rgba(0,0,0,0.82);border-radius:6px"></div>

<div class="a" style="left:32px;top:94px;width:53px;height:30px;background:rgba(120,130,135,0.36);border-radius:4px"></div>
<div class="btn" style="left:32px;top:128px;width:55px;height:30px;border-radius:5px 5px 0 0"></div>
<div class="btn" style="left:32px;top:160px;width:55px;height:30px"></div>
<div class="btn sel" style="left:32px;top:192px;width:55px;height:30px"></div>
<div class="btn" style="left:32px;top:224px;width:55px;height:30px"></div>
<div class="btn" style="left:32px;top:256px;width:55px;height:30px"></div>
<div class="btn" style="left:32px;top:288px;width:55px;height:30px;border-radius:0 0 5px 5px"></div>
<div class="btn" style="left:32px;top:322px;width:55px;height:30px;border-radius:5px 5px 0 0"></div>
<div class="btn" style="left:32px;top:354px;width:55px;height:30px;border-radius:0 0 5px 5px"></div>
<svg style="left:27px;top:68px" width="65" height="320" viewBox="27 68 65 320">
  <!-- disabled cube -->
  <path d="M57.3 99 L66.6 103.8 V114.6 L57.3 119.4 L48 114.6 V103.8 Z M48 103.8 L57.3 108.6 L66.6 103.8 M57.3 108.6 V119.4" fill="none" stroke="#7f888b" stroke-width="1.2" stroke-linejoin="round"/>
  <!-- hand -->
  <svg x="30" y="125" width="60" height="100" viewBox="0 0 484 807"><path d="M205 228 L275 228 C288 195 305 150 322 112 C326 99 307 93 301 106 L284 148 L291 72 C292 56 269 54 267 70 L262 138 L251 60 C250 44 225 44 224 60 L222 138 L210 74 C207 58 185 62 187 78 L196 165 L172 130 C164 118 145 126 152 140 C165 170 185 200 205 228 Z" fill="#c8c8c8"/></svg>
  <!-- move -->
  <g fill="none" stroke="#c8c8c8" stroke-width="1.3">
    <path d="M58.9 164V172.2 M58.9 177.8V186 M47.6 175H56.1 M61.7 175H70.2"/>
    <path d="M55.9 167 L58.9 164 L61.9 167 M55.9 183 L58.9 186 L61.9 183 M50.6 172 L47.6 175 L50.6 178 M67.2 172 L70.2 175 L67.2 178"/>
  </g>
  <!-- rotate -->
  <svg x="30" y="125" width="60" height="100" viewBox="0 0 484 807"><g fill="none" stroke="#ececec" stroke-width="11">
    <path d="M215 582 C172 590 151 628 152 664 C154 700 172 730 203 741"/><path d="M148 742 H205 V688"/>
    <path d="M264 583 C300 594 318 630 316 662 C314 702 288 736 243 743"/><path d="M317 582 H262 V636"/>
  </g></svg>
  <!-- scale -->
  <g fill="none" stroke="#c8c8c8" stroke-width="1.3">
    <rect x="49.5" y="229.4" width="19" height="18.9"/><rect x="49.5" y="242.5" width="6.4" height="5.8"/>
    <path d="M56.6 241.8 L64 234.4 M59 234.300 H64.200 V239.700"/>
  </g>
  <!-- rect -->
  <g fill="#c8c8c8"><rect x="48.8" y="261" width="3.8" height="3.7"/><rect x="65.3" y="261" width="3.8" height="3.7"/><rect x="48.8" y="277.4" width="3.8" height="3.7"/><rect x="65.3" y="277.4" width="3.8" height="3.7"/></g>
  <path d="M54.6 262.8H63.4 M54.6 279.2H63.4 M50.7 266.6V275.4 M67.2 266.6V275.4" stroke="#c8c8c8" stroke-width="1.3"/>
  <!-- transform -->
  <circle cx="58.9" cy="302.7" r="9.3" fill="none" stroke="#c8c8c8" stroke-width="1.3" stroke-dasharray="11.2 3.4" stroke-dashoffset="5.6"/>
  <g fill="none" stroke="#c8c8c8" stroke-width="1.3">
    <path d="M58.9 296V309.4 M52.2 302.7H65.6"/>
    <path d="M56.7 298.2 L58.9 296 L61.1 298.2 M56.7 307.2 L58.9 309.4 L61.1 307.2 M54.4 300.5 L52.2 302.7 L54.4 304.9 M63.4 300.5 L65.6 302.7 L63.4 304.9"/>
  </g>
  <path d="M66.4 291.4 H70.6 V295.6Z M47.2 309.8 V314 H51.4Z" fill="#c8c8c8"/>
  <!-- custom cube -->
  <g fill="none" stroke="#a8a8a8" stroke-width="1.5" stroke-linejoin="round" filter="url(#bl2)">
    <rect x="53.2" y="332.800" width="15" height="12.800" rx="1.2"/>
    <path d="M53.2 345 L49.6 341.200 V329.600 Q49.600 327.800 51.400 327.800 H62.600 Q64.400 327.800 65.200 328.800 L68.200 333 M49.900 328.200 L53.400 333"/>
  </g>
  <defs><filter id="bl2" x="-20%" y="-20%" width="140%" height="140%"><feGaussianBlur stdDeviation="0.45"/></filter></defs>
  <path d="M83.8 342.6 V348.4 H78Z" fill="#c8c8c8"/>
  <!-- last: mesh thing -->
  <g filter="url(#bl2)">
    <path d="M55.2 362.1 L64.3 366.8 L67.4 375.6 Q58 371.400 50.5 372.7 Z" fill="#989898"/>
    <path d="M54.800 372 Q55.500 365.200 58.800 365.600 Q63 366.800 64.200 373.400 Q59 371.800 54.800 372Z" fill="#c6c6c6"/>
    <g fill="#8e8e8e" stroke="#b8b8b8" stroke-width="0.9"><circle cx="55.2" cy="362.1" r="1.9"/><circle cx="64.3" cy="366.8" r="1.9"/><circle cx="50.5" cy="372.7" r="1.9"/><circle cx="67.4" cy="375.6" r="1.9"/></g>
  </g>
</svg>

<!-- ===== LEFT STRIP SCROLLBAR ===== -->
<div class="a" style="left:0;top:56px;width:2px;height:481px;background:#303030"></div>
<div class="a" style="left:4px;top:81px;width:14px;height:315px;background:#5e5e5e;border-radius:7px"></div>
<div class="a" style="left:2px;top:512.5px;width:19px;height:1px;background:#343434"></div>
<svg style="left:0;top:60px" width="22" height="480" viewBox="0 60 22 480">
  <path d="M6 72 L11 65.5 L16 72Z" fill="#c8c8c8"/><path d="M6 522 H16 L11 528Z" fill="#c8c8c8"/>
</svg>
<!-- ===== BOTTOM OVERLAY TOOLBAR ===== -->
<div class="a" style="left:27px;top:494px;width:576px;height:39.5px;background:rgba(0,0,0,0.82);border-radius:6px"></div>

<div class="btn sel" style="left:51px;top:499px;width:48px;height:30px;border-radius:4px 0 0 4px"></div>
<div class="btn sel" style="left:101px;top:499px;width:48px;height:30px"></div>
<div class="btn sel" style="left:151px;top:499px;width:48px;height:30px"></div>
<div class="btn sel" style="left:201px;top:499px;width:48px;height:30px"></div>
<div class="btn sel" style="left:251px;top:499px;width:48px;height:30px"></div>
<div class="btn" style="left:301px;top:499px;width:48px;height:30px"></div>
<div class="btn sel" style="left:351px;top:499px;width:48px;height:30px"></div>
<div class="btn" style="left:401px;top:499px;width:48px;height:30px"></div>
<div class="btn" style="left:451px;top:499px;width:48px;height:30px"></div>
<div class="btn sel" style="left:501px;top:499px;width:48px;height:30px"></div>
<div class="btn sel" style="left:551px;top:499px;width:48px;height:30px;border-radius:0 4px 4px 0"></div>
<svg style="left:27px;top:494px" width="576" height="40" viewBox="27 494 576 40">
  <!-- tools / sliders / grid-slash (zoom coords) -->
  <svg x="48" y="496" width="154" height="36" viewBox="0 0 1475 345">
    <path d="M226 142 L320 236" stroke="#d4d4d4" stroke-width="36" stroke-linecap="round" fill="none"/>
    <path d="M198.900 88.100 A25 25 0 1 1 172.100 114.900" stroke="#d4d4d4" stroke-width="20" fill="none"/>
    <path d="M330 100 L196 234" stroke="#46607c" stroke-width="54" fill="none"/>
    <path d="M322 108 L214 216" stroke="#d4d4d4" stroke-width="36" stroke-linecap="round" fill="none"/>
    <path d="M192 216 L224 248 L170 264Z" fill="#d4d4d4"/>
    <rect x="650" y="75" width="172" height="67" rx="13" fill="#d4d4d4"/><rect x="740" y="88" width="70" height="42" rx="4" fill="#46607c"/>
    <path d="M650 195H822 M650 250H822" stroke="#d4d4d4" stroke-width="10" fill="none"/>
    <path d="M708 176V214 M765 232V270" stroke="#d4d4d4" stroke-width="22" stroke-linecap="round" fill="none"/>
    <path d="M1120 268 L1312 75" stroke="#d4d4d4" stroke-width="12" fill="none"/>
    <path d="M1150 88V195 M1195 88V165 M1240 85V120 M1120 115H1250 M1120 155H1210 M1120 190H1160 M1305 140V268 M1270 165V260 M1235 205V260 M1192 235V268 M1262 175H1315 M1225 210H1315 M1215 240H1315" stroke="#d4d4d4" stroke-width="11.5" fill="none"/>
  </svg>
  <!-- crescent -->
  <circle cx="224.8" cy="513.9" r="10.6" fill="#d4d4d4"/><circle cx="223.5" cy="512.6" r="8" fill="#46607c"/>
  <!-- dot + grid -->
  <circle cx="268.6" cy="507" r="3.9" fill="#d4d4d4"/>
  <path d="M264.8 517.6 L275 511.6 L285.2 517.6 L275 523.6Z M269.9 514.6 L280.1 520.6 M280.1 514.6 L269.9 520.6" fill="none" stroke="#d4d4d4" stroke-width="1.4"/>
  <!-- search -->
  <circle cx="322.6" cy="512.4" r="5.7" fill="none" stroke="#d4d4d4" stroke-width="1.5"/><path d="M326.8 516.6 L333.2 522.4" stroke="#d4d4d4" stroke-width="2.2"/>
  <!-- gizmo tool -->
  <rect x="372.4" y="511.7" width="4.6" height="4.6" fill="none" stroke="#d4d4d4" stroke-width="1.2"/>
  <path d="M371.300 503.600 H378.100 L374.700 510.200Z M371.300 524.400 H378.100 L374.700 517.800Z M364.400 510.600 V517.400 L371 514Z M385 510.600 V517.400 L378.400 514Z" fill="#d4d4d4"/>
  <!-- camera eye -->
  <rect x="414.8" y="504.4" width="13" height="11" rx="1.2" fill="#d4d4d4"/><path d="M427.8 509 L432.6 505.6 V514.4 L427.8 511Z" fill="#d4d4d4"/>
  <path d="M420.4 519.6 Q427.8 512.2 435.2 519.6 Q427.8 527 420.4 519.6Z" fill="#d4d4d4" stroke="#585858" stroke-width="1"/>
  <circle cx="427.8" cy="519.4" r="2.3" fill="#585858"/>
  <!-- compass -->
  <g filter="url(#bl3)">
    <circle cx="525" cy="514" r="9.6" fill="none" stroke="#9aa6b4" stroke-width="1.6"/>
    <path d="M531 506.4 L527.2 516.2 L519 521.6 L522.8 511.8Z" fill="#9aa6b4"/>
  </g>
  <defs><filter id="bl3" x="-20%" y="-20%" width="140%" height="140%"><feGaussianBlur stdDeviation="0.4"/></filter></defs>
</svg>
<!-- ===== AI NAV / HOT RELOAD OVERLAYS ===== -->
<div class="a" style="left:922px;top:388px;width:158px;height:146px;background:rgba(0,0,0,0.82);border-radius:5px"></div>
<div class="a" style="left:785px;top:457px;width:295px;height:77px;background:rgba(0,0,0,0.82);border-radius:5px"></div>


<div class="a" style="left:799.2px;top:489px;width:32.8px;height:32.8px;border-radius:50%;background:#3a4848;filter:blur(0.5px)"></div>
<svg style="left:930px;top:415px" width="30" height="110" viewBox="930 415 30 110">
  <path d="M936 420.6 L948 426.8 L936 433Z" fill="#4e6262"/>
  <path d="M936 459.6 L948 465.8 L936 472Z" fill="#0e1a1a"/>
  <path d="M936 498.6 L948 504.8 L936 511Z" fill="#0a1212"/>
</svg>

<!-- ===== ORIENTATION GIZMO ===== -->

<svg style="left:950px;top:80px" width="120" height="150" viewBox="950 80 120 150">
  <defs>
    <linearGradient id="gy" x1="0" x2="1" y1="0" y2="0"><stop offset="0" stop-color="#78d850"/><stop offset="0.5" stop-color="#98f468"/><stop offset="1" stop-color="#84e058"/></linearGradient>
    <linearGradient id="gx" x1="0" x2="0" y1="0" y2="1"><stop offset="0" stop-color="#d87068"/><stop offset="0.6" stop-color="#d06860"/><stop offset="1" stop-color="#b85850"/></linearGradient>
    <linearGradient id="gl" x1="0" x2="0" y1="0" y2="1"><stop offset="0" stop-color="#b8ccd6"/><stop offset="0.6" stop-color="#a8c0cc"/><stop offset="1" stop-color="#90aab8"/></linearGradient>
    <linearGradient id="gb" x1="0" x2="1" y1="0" y2="0"><stop offset="0" stop-color="#98b4c2"/><stop offset="0.5" stop-color="#b4ccd8"/><stop offset="1" stop-color="#9cb8c6"/></linearGradient>
  </defs>
  <path d="M990.2 104.6 H1009.2 L999.7 131.4Z" fill="url(#gy)"/>
  <path d="M960.6 134.6 V153.6 L987.8 144.1Z" fill="url(#gl)"/>
  <path d="M1039.8 134.6 V153.6 L1012 144.1Z" fill="url(#gx)"/>
  <path d="M990.2 183.4 H1009.2 L999.7 156.6Z" fill="url(#gb)"/>
  <rect x="990" y="134.2" width="19.6" height="19.6" fill="#e6fcff"/>
  <!-- lock (open) -->
  <rect x="1043.8" y="98" width="10.4" height="7.8" rx="0.8" fill="#c2dde8"/>
  <path d="M1051.4 98 V95.6 A2.7 2.7 0 0 0 1046 95.6" fill="none" stroke="#c2dde8" stroke-width="1.4"/>
  <!-- back icon -->
  <path d="M964.8 214.2H980.2 M964.8 218.6H980.2 M964.8 223H980.2" stroke="rgba(255,255,255,0.42)" stroke-width="1.3"/>
</svg>
<div class="t" style="left:994.6px;top:81.5px;font-size:17px;font-weight:700;color:#fff">y</div>
<div class="t" style="left:1045.6px;top:132.5px;font-size:17px;font-weight:700;color:#fff">x</div>

<!-- overlay drag handles -->
<svg style="left:24px;top:65px" width="1059" height="472" viewBox="24 65 1059 472">
  <path d="M47 78.200H71 M47 82.800H71 M921 78.300H945 M921 82.700H945 M930 398.900H954 M930 403.200H954 M793 466.800H817 M793 471.100H817 M35.400 502V526 M39.800 502V526" stroke="#6e6662" stroke-width="1.5" fill="none"/>
</svg>

<!-- ===== INSPECTOR ===== -->
<div class="a" style="left:1086px;top:26px;width:389px;height:110px;background:#3c3c3c"></div>
<div class="a" style="left:1086px;top:182px;width:389px;height:136px;background:#3c3c3c"></div>
<div class="hl" style="left:1086px;top:135.100px;width:389px"></div>
<div class="hl" style="left:1086px;top:180.300px;width:389px"></div>
<div class="hl" style="left:1086px;top:220.500px;width:389px"></div>
<div class="hl" style="left:1086px;top:317px;width:389px"></div>
<div class="a" style="left:1086px;top:319px;width:389px;height:29px;background:#3e3e3e"></div>
<div class="a" style="left:1086px;top:348px;width:389px;height:1px;background:#2e2e2e"></div>
<div class="hl" style="left:1086px;top:457px;width:389px"></div>
<div class="hl" style="left:1086px;top:785px;width:389px"></div>
<div class="a" style="left:1086px;top:787px;width:389px;height:20px;background:#3e3e3e"></div>
<!-- tab icon -->
<svg style="left:1250px;top:2px" width="16" height="16" viewBox="1250 2 16 16">
  <circle cx="1258.1" cy="9.3" r="6.8" fill="#c8c8c8"/>
  <rect x="1257" y="8.2" width="2.3" height="5.2" fill="#3c3c3c"/><rect x="1256.2" y="8.2" width="2" height="1.3" fill="#3c3c3c"/><rect x="1256" y="12.4" width="4.4" height="1.3" fill="#3c3c3c"/>
  <circle cx="1258.1" cy="5.6" r="1.4" fill="#3c3c3c"/>
</svg>
<!-- big cube -->
<svg style="left:1097px;top:37px" width="41" height="43" viewBox="0 0 100 106">
  <path d="M50 2 Q52 2 54 3 L93 21 Q95 22.5 92 24 L54 43 Q50 45 46 43 L8 24 Q5 22.5 7 21 L46 3 Q48 2 50 2Z" fill="#80d8ff"/>
  <path d="M2 31 Q2 28 5 29.5 L42 48 Q45 49.5 45 53 V100 Q45 104 42 102.5 L6 84 Q2 82 2 78Z" fill="#80d8ff"/>
  <path d="M98 31 Q98 28 95 29.5 L58 48 Q55 49.5 55 53 V100 Q55 104 58 102.5 L94 84 Q98 82 98 78Z" fill="#80d8ff"/>
</svg>
<!-- small cube -->
<svg style="left:1097px;top:238.2px" width="30" height="32.2" viewBox="0 0 100 106" preserveAspectRatio="none">
  <path d="M50 2 Q52 2 54 3 L93 21 Q95 22.5 92 24 L54 43 Q50 45 46 43 L8 24 Q5 22.5 7 21 L46 3 Q48 2 50 2Z" fill="#80d8ff"/>
  <path d="M2 31 Q2 28 5 29.5 L42 48 Q45 49.5 45 53 V100 Q45 104 42 102.5 L6 84 Q2 82 2 78Z" fill="#80d8ff"/>
  <path d="M98 31 Q98 28 95 29.5 L58 48 Q55 49.5 55 53 V100 Q55 104 58 102.5 L94 84 Q98 82 98 78Z" fill="#80d8ff"/>
</svg>
<svg style="left:1086px;top:25px" width="389" height="500" viewBox="1086 25 389 500">
  <path d="M1126 269.8 H1136 L1131 275.2Z" fill="#c8c8c8"/>
  <!-- preset button -->
  <rect x="1419.2" y="68.600" width="70" height="23.800" rx="4" fill="#525252" stroke="#282828" stroke-width="1.3"/>
  <path d="M1435.6 75.600H1447 M1438.600 80.600H1447 M1438.600 84.900H1447" stroke="#c8c8c8" stroke-width="1.4"/>
  <circle cx="1433.300" cy="75.400" r="1.300" fill="#c8c8c8"/><circle cx="1436.300" cy="80.600" r="1.300" fill="#c8c8c8"/><circle cx="1436.300" cy="84.900" r="1.300" fill="#c8c8c8"/>
  <path d="M1462.4 78 H1475.4 L1468.9 84.4Z" fill="#c8c8c8"/>
  <!-- foldout arrow -->
  <path d="M1095.5 329 H1107.7 L1101.6 340.8Z" fill="#787878"/>
  <!-- transform icon -->
  <g stroke-linecap="round" stroke-width="3.2" fill="none">
    <path d="M1128.4 326.8 V333.2" stroke="#b0f040"/>
    <path d="M1125.800 337 L1121 339.900" stroke="#58c0f4"/>
    <path d="M1131.600 337 L1136.400 339.900" stroke="#f06a30"/>
  </g>
  <!-- link icon -->
  <g fill="none" stroke="#c8c8c8" stroke-width="1.4">
    <path d="M1249.6 424.4 H1247 A4.2 4.2 0 0 0 1247 432.8 H1249.6 M1252.4 424.4 H1255 A4.2 4.2 0 0 1 1255 432.8 H1252.4 M1247.6 428.6 H1254.4"/>
    <path d="M1244.4 421.6 L1258.4 436"/>
  </g>
  <!-- tag arrow -->
</svg>
<!-- checkboxes & fields -->
<div class="fld" style="left:1090px;top:101px;width:21px;height:21px;"></div>
<div class="fld" style="left:1156px;top:239px;width:21px;height:21px;"></div>
<svg style="left:1156px;top:239px" width="21" height="21" viewBox="0 0 21 21"><path d="M4.6 10.8 L8.6 14.6 L16.2 6.2" fill="none" stroke="#e4e4e4" stroke-width="2"/></svg>
<div class="fld" style="left:1186px;top:236px;width:254px;height:26.8px;background:#303030;border-color:#242424"></div>
<div class="fld" style="left:1446px;top:239px;width:21px;height:21px;"></div>
<div class="t" style="left:1473px;top:240px;font-size:18px;color:#c8c8c8">S</div>
<div class="a" style="left:1185px;top:273.200px;width:155px;height:25.300px;background:#515151;border:1px solid #2c2c2c;border-radius:4px;box-sizing:border-box"></div>
<svg style="left:1318px;top:280px" width="16" height="12" viewBox="1318 280 16 12"><path d="M1320 283 H1331 L1325.5 289.2Z" fill="#c8c8c8"/></svg>
<div class="a" style="left:1415px;top:273.200px;width:80px;height:25.300px;background:#515151;border:1px solid #2c2c2c;border-radius:4px;box-sizing:border-box"></div>
<div class="fld" style="left:1297px;top:356px;width:67px;height:26.4px;"></div>
<div class="fld" style="left:1393px;top:356px;width:67px;height:26.4px;"></div>
<div class="fld" style="left:1297px;top:386px;width:67px;height:26.4px;"></div>
<div class="fld" style="left:1393px;top:386px;width:67px;height:26.4px;"></div>
<div class="fld" style="left:1297px;top:416px;width:67px;height:26.4px;"></div>
<div class="fld" style="left:1393px;top:416px;width:67px;height:26.4px;"></div>
<div class="a" style="left:1153.6px;top:472.5px;width:340px;height:33px;background:#585858;border-radius:4px;border:1px solid #303030;box-sizing:border-box;box-shadow:0 1px 0 #2a2a2a"></div>

<!-- ===== PROJECT PANEL ===== -->
<svg style="left:1028px;top:546px" width="44" height="24" viewBox="1028 546 44 24">
  <rect x="1031.7" y="557.6" width="10.8" height="6.6" fill="none" stroke="#e0e0e0" stroke-width="1.4"/>
  <path d="M1040.6 557.6 V554.4 A3 3 0 0 0 1034.8 553.4" fill="none" stroke="#e0e0e0" stroke-width="1.4"/>
  <circle cx="1062.7" cy="552.4" r="1.6" fill="#c8c8c8"/><circle cx="1062.7" cy="557.8" r="1.6" fill="#c8c8c8"/><circle cx="1062.7" cy="563.2" r="1.6" fill="#c8c8c8"/>
</svg>
<div class="fld" style="left:381.4px;top:579.7px;width:476px;height:23.4px;border-radius:6px;border:1.3px solid #1f1f1f"></div>
<div class="a" style="left:833px;top:581px;width:23px;height:21px;background:#3a3a3a;border-radius:0 5px 5px 0"></div>
<div class="a" style="left:863px;top:576px;width:36px;height:29.5px;background:#464646"></div>
<div class="a" style="left:902px;top:576px;width:36px;height:29.5px;background:#464646"></div>
<div class="a" style="left:939.6px;top:576px;width:1.4px;height:29.5px;background:#2c2c2c"></div>
<div class="a" style="left:943px;top:576px;width:36px;height:29.5px;background:#464646"></div>
<div class="a" style="left:981.8px;top:576px;width:37px;height:29.5px;background:#464646"></div>
<div class="a" style="left:1021px;top:576px;width:62px;height:29.5px;background:#464646"></div>
<svg style="left:380px;top:575px" width="703" height="31" viewBox="380 575 703 31">
  <circle cx="391.800" cy="589.600" r="2.700" fill="none" stroke="#c8c8c8" stroke-width="1.5"/><path d="M393.800 591.800 L398 596" stroke="#c8c8c8" stroke-width="1.8"/>
  <!-- open-in-window icon -->
  <rect x="839.8" y="582.2" width="12.6" height="12.6" rx="2.2" fill="none" stroke="#c8c8c8" stroke-width="1.3"/>
  <rect x="835.6" y="593" width="6.4" height="6.4" fill="#3a3a3a" stroke="#c8c8c8" stroke-width="1.3"/>
  <path d="M841.8 593.2 L848.6 586.4 M844.2 586.2 H848.8 V590.8" fill="none" stroke="#c8c8c8" stroke-width="1.3"/>
  <!-- shapes -->
  <rect x="874.6" y="580.8" width="9" height="8.2" fill="#c8c8c8"/><circle cx="877" cy="594.8" r="5" fill="#c8c8c8" stroke="#464646" stroke-width="1"/>
  <path d="M885.4 584.6 L890.2 594 H880.6Z" fill="#c8c8c8" stroke="#464646" stroke-width="1"/>
  <!-- tag -->
  <path d="M911.2 592.2 L919.4 585 L926.4 584 L926.2 590.4 L917.6 598.4Z" fill="#c8c8c8"/><circle cx="922.9" cy="587.6" r="1.2" fill="#464646"/>
  <!-- error octagon -->
  <path d="M953.2 580.8 H964.8 L969 585 V595.4 L964.8 599.6 H953.2 L949 595.4 V585Z" fill="#c8c8c8"/>
  <rect x="958" y="583.6" width="2" height="9" fill="#464646"/><circle cx="959" cy="595.4" r="1.3" fill="#464646"/>
  <!-- star -->
  <path d="M998.9 582.2 L1001.2 588 L1007.6 588.4 L1002.6 592.4 L1004.3 598.4 L998.9 595 L993.5 598.4 L995.2 592.4 L990.2 588.4 L996.6 588Z" fill="#8c8c8c"/>
  <!-- eye dim -->
  <path d="M1028.4 591 Q1038.9 580.4 1049.4 591 Q1038.9 601.6 1028.4 591Z" fill="none" stroke="#7a7a7a" stroke-width="1.5"/><circle cx="1038.9" cy="589.8" r="4" fill="#7a7a7a"/>
</svg>
<!-- breadcrumb chevrons -->
<svg style="left:102px;top:608px" width="500" height="31" viewBox="102 608 500 31">
  <path d="M177 618 L183 623.2 L177 628.4 M273 618 L279 623.2 L273 628.4 M326 618 L332 623.2 L326 628.4 M453.4 618 L459.4 623.2 L453.4 628.4" fill="none" stroke="#a4a4a4" stroke-width="1.6"/>
</svg>
<!-- tree scrollbar -->
<div class="a" style="left:84.3px;top:663.6px;width:13.4px;height:37.5px;background:#5e5e5e;border-radius:6.7px"></div>
<svg style="left:82px;top:612px" width="18" height="14" viewBox="82 612 18 14"><path d="M85.8 623.4 L90.9 617 L96 623.4Z" fill="#c8c8c8"/></svg>
<!-- asset cubes -->
<svg style="left:129.4px;top:660px" width="79.4" height="84.4" viewBox="0 0 100 106">
  <path d="M50 1.5 Q52 1.5 54 2.5 L92 20.5 Q95.5 22.5 92 24.5 L54 43.5 Q50 45.5 46 43.500 L8 24.5 Q4.500 22.5 8 20.5 L46 2.5 Q48 1.5 50 1.5Z" fill="#80d8ff"/>
  <path d="M0.500 31 Q0.500 27.500 4 29.300 L42.500 48.500 Q45.500 50 45.500 53.500 V101 Q45.500 104.500 42.500 103 L5 84.500 Q0.500 82.300 0.500 78Z" fill="#80d8ff"/>
  <path d="M99.500 31 Q99.500 27.500 96 29.300 L57.500 48.500 Q54.500 50 54.500 53.500 V101 Q54.500 104.500 57.500 103 L95 84.500 Q99.500 82.300 99.500 78Z" fill="#80d8ff"/>
</svg>
<svg style="left:243.4px;top:660px" width="79.4" height="84.4" viewBox="0 0 100 106">
  <path d="M50 1.5 Q52 1.5 54 2.5 L92 20.5 Q95.5 22.5 92 24.5 L54 43.5 Q50 45.5 46 43.500 L8 24.5 Q4.500 22.5 8 20.5 L46 2.5 Q48 1.5 50 1.5Z" fill="#6cc0ff"/>
  <path d="M0.500 31 Q0.500 27.500 4 29.300 L42.500 48.500 Q45.500 50 45.500 53.500 V101 Q45.500 104.500 42.500 103 L5 84.500 Q0.500 82.300 0.500 78Z" fill="#6cc0ff"/>
  <path d="M99.500 31 Q99.500 27.500 96 29.300 L57.500 48.500 Q54.500 50 54.500 53.500 V101 Q54.500 104.500 57.500 103 L95 84.500 Q99.500 82.300 99.500 78Z" fill="#6cc0ff"/>
</svg>
<div class="a" style="left:255px;top:752.3px;width:64px;height:20.7px;background:#505050;border-radius:4px"></div>


<!-- text -->
<div class="t" style="left:61.9px;top:-1.2px;font-size:18px;color:#c8c8c8;letter-spacing:0.48px;">Scene</div>
<div class="t" style="left:172.0px;top:-1.2px;font-size:18px;color:#c8c8c8;letter-spacing:0.33px;">Game</div>
<div class="t" style="left:279.6px;top:-1.2px;font-size:18px;color:#c8c8c8;letter-spacing:0.65px;">VertexShader</div>
<div class="t" style="left:1099.8px;top:-1.2px;font-size:18px;color:#c8c8c8;letter-spacing:0.61px;">Vertex Colors</div>
<div class="t" style="left:1271.4px;top:-1.2px;font-size:18px;color:#c8c8c8;letter-spacing:0.92px;">Inspector</div>
<div class="t" style="left:1385.0px;top:-1.2px;font-size:18px;color:#c8c8c8;letter-spacing:0.97px;">Custom Pr</div>
<div class="t" style="left:76.8px;top:35.2px;font-size:18px;color:#c8c8c8;letter-spacing:1.21px;">Center</div>
<div class="t" style="left:193.4px;top:35.2px;font-size:18px;color:#c8c8c8;letter-spacing:0.82px;">Global</div>
<div class="t" style="left:312.3px;top:36.1px;font-size:18px;color:#c8c8c8;">1</div>
<div class="t" style="left:1153.8px;top:34.7px;font-size:20.5px;color:#9a9a9a;letter-spacing:0.25px;">Knight (Prefab Asset)</div>
<div class="t" style="left:1116.5px;top:103.8px;font-size:18px;color:#c8c8c8;letter-spacing:0.63px;">Addressable</div>
<div class="t" style="left:1091.2px;top:191.4px;font-size:18px;color:#c8c8c8;letter-spacing:0.45px;">Root in Prefab Asset (Open for full editing support)</div>
<div class="t" style="left:1190.5px;top:241.2px;font-size:18px;color:#8c8c8c;font-weight:700;letter-spacing:0.36px;">Knight</div>
<div class="t" style="left:1146.6px;top:275.8px;font-size:18px;color:#c8c8c8;letter-spacing:1.66px;">Tag</div>
<div class="t" style="left:1189.3px;top:275.8px;font-size:18px;color:#c8c8c8;letter-spacing:0.99px;">Untagged</div>
<div class="t" style="left:1359.0px;top:275.8px;font-size:18px;color:#c8c8c8;letter-spacing:0.86px;">Layer</div>
<div class="t" style="left:1419.2px;top:275.8px;font-size:18px;color:#c8c8c8;letter-spacing:1.01px;">Default</div>
<div class="t" style="left:1176.8px;top:324.8px;font-size:18px;color:#dcdcdc;font-weight:700;letter-spacing:0.52px;">Transform</div>
<div class="t" style="left:1113.4px;top:359.8px;font-size:18px;color:#c8c8c8;letter-spacing:0.67px;">Position</div>
<div class="t" style="left:1113.4px;top:389.8px;font-size:18px;color:#c8c8c8;letter-spacing:0.74px;">Rotation</div>
<div class="t" style="left:1113.7px;top:419.8px;font-size:18px;color:#c8c8c8;letter-spacing:0.46px;">Scale</div>
<div class="t" style="left:1274.5px;top:359.8px;font-size:18px;color:#c8c8c8;">X</div>
<div class="t" style="left:1274.5px;top:389.8px;font-size:18px;color:#c8c8c8;">X</div>
<div class="t" style="left:1274.5px;top:419.8px;font-size:18px;color:#c8c8c8;">X</div>
<div class="t" style="left:1371.5px;top:359.8px;font-size:18px;color:#c8c8c8;">Y</div>
<div class="t" style="left:1371.5px;top:389.8px;font-size:18px;color:#c8c8c8;">Y</div>
<div class="t" style="left:1371.5px;top:419.8px;font-size:18px;color:#c8c8c8;">Y</div>
<div class="t" style="left:1467.0px;top:359.8px;font-size:18px;color:#c8c8c8;">Z</div>
<div class="t" style="left:1467.0px;top:389.8px;font-size:18px;color:#c8c8c8;">Z</div>
<div class="t" style="left:1467.0px;top:419.8px;font-size:18px;color:#c8c8c8;">Z</div>
<div class="t" style="left:1301.0px;top:359.8px;font-size:18px;color:#c8c8c8;letter-spacing:1.48px;">-0.037</div>
<div class="t" style="left:1397.7px;top:359.8px;font-size:18px;color:#c8c8c8;">0</div>
<div class="t" style="left:1301.0px;top:389.8px;font-size:18px;color:#c8c8c8;">0</div>
<div class="t" style="left:1397.7px;top:389.8px;font-size:18px;color:#c8c8c8;">0</div>
<div class="t" style="left:1300.7px;top:419.8px;font-size:18px;color:#c8c8c8;">1</div>
<div class="t" style="left:1397.4px;top:419.8px;font-size:18px;color:#c8c8c8;">1</div>
<div class="t" style="left:1255.2px;top:478.6px;font-size:18px;color:#dadada;letter-spacing:0.66px;">Add Component</div>
<div class="t" style="left:1091.9px;top:792.8px;font-size:18px;color:#dcdcdc;font-weight:700;letter-spacing:0.24px;">Asset Labels</div>
<div class="t" style="left:-5.8px;top:549.6px;font-size:21.5px;color:#c8c8c8;">n</div>
<div class="t" style="left:107.8px;top:612.3px;font-size:18px;color:#c8c8c8;letter-spacing:0.80px;">Assets</div>
<div class="t" style="left:191.0px;top:612.3px;font-size:18px;color:#c8c8c8;letter-spacing:0.95px;">OrcsUp!</div>
<div class="t" style="left:288.8px;top:612.3px;font-size:18px;color:#c8c8c8;letter-spacing:1.38px;">Art</div>
<div class="t" style="left:340.0px;top:612.3px;font-size:18px;color:#c8c8c8;letter-spacing:0.93px;">OwnModels</div>
<div class="t" style="left:468.0px;top:612.3px;font-size:18px;color:#dcdcdc;font-weight:700;letter-spacing:0.85px;">Chars</div>
<div class="t" style="left:156.0px;top:752.8px;font-size:15px;color:#c8c8c8;letter-spacing:0.84px;">King</div>
<div class="t" style="left:263.1px;top:752.8px;font-size:15px;color:#d8d8d8;letter-spacing:0.68px;">Knight</div>
<div class="t" style="left:1053.0px;top:581.2px;font-size:18.5px;color:#c8c8c8;letter-spacing:1.36px;">46</div>
<div class="t" style="left:962.5px;top:390.3px;font-size:18px;color:#8f9b9b;letter-spacing:0.51px;">AI Navigation</div>
<div class="t" style="left:955.5px;top:416.8px;font-size:18px;color:#d4d8d8;letter-spacing:0.73px;">Surfaces</div>
<div class="t" style="left:956.4px;top:455.8px;font-size:18px;color:#2e3a3a;letter-spacing:0.68px;">Agents</div>
<div class="t" style="left:955.6px;top:494.8px;font-size:18px;color:#1c2626;letter-spacing:0.67px;">Obstacles</div>
<div class="t" style="left:824.4px;top:459.3px;font-size:18px;color:#8f9b9b;letter-spacing:0.53px;">Hot Reload</div>
<div class="t" style="left:876.4px;top:495.8px;font-size:18px;color:#e4e4e4;letter-spacing:0.53px;">Hot Reload inactive</div>
<div class="t" style="left:984.4px;top:208.1px;font-size:18px;color:rgba(255,255,255,0.42);letter-spacing:0.82px;">Back</div>
<div class="t" style="left:463.0px;top:504.4px;font-size:18px;color:#c8c8c8;letter-spacing:0.01px;">XB</div>
<div class="t" style="left:561.8px;top:504.4px;font-size:18px;color:#c8c8c8;letter-spacing:-0.16px;">HR</div>
</body></html>
